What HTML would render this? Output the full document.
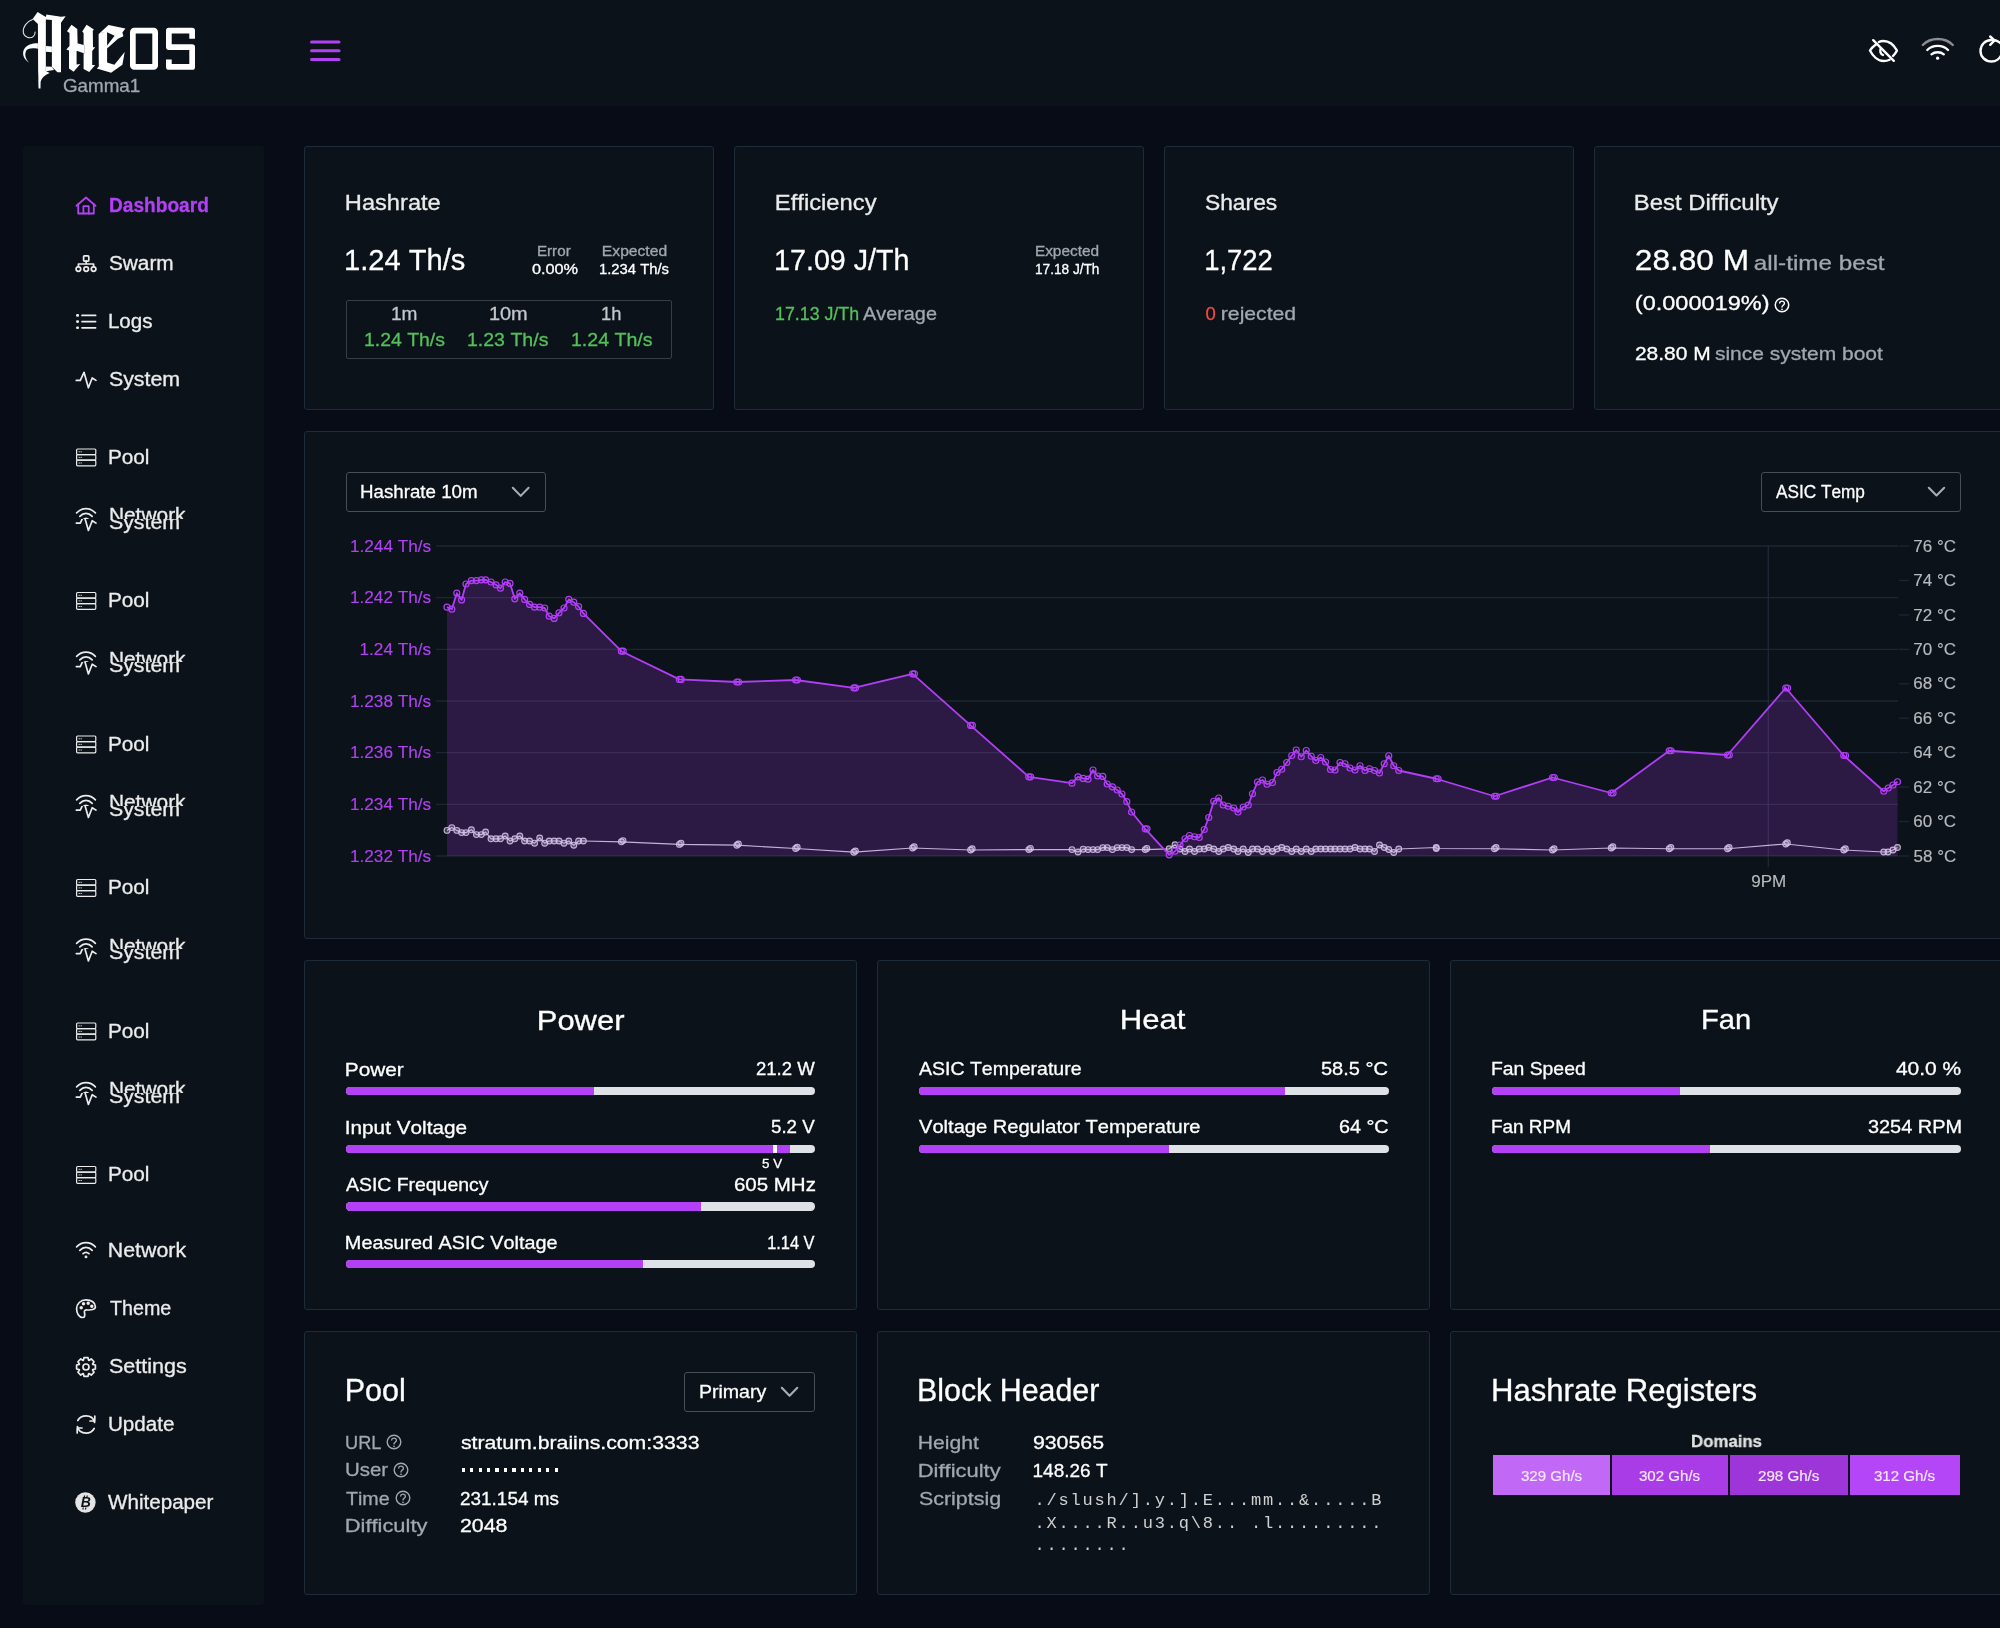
<!DOCTYPE html>
<html><head><meta charset="utf-8"><title>AxeOS Dashboard</title><style>*{margin:0;padding:0;box-sizing:border-box;}
html,body{width:2000px;height:1628px;overflow:hidden;background:#080c16;}
body{position:relative;font-family:"Liberation Sans",sans-serif;font-kerning:none;}
.t{position:absolute;white-space:nowrap;line-height:1;font-kerning:none;-webkit-text-stroke:0.3px currentColor;}
.card{position:absolute;background:#0b1219;border:1px solid #1e2b38;border-radius:3px;}
svg{overflow:visible;}</style></head><body>
<div id="app" style="position:absolute;left:0;top:0;width:2000px;height:1628px;overflow:hidden;will-change:transform;">
<div id="hdr" style="position:absolute;left:0;top:0;width:2000px;height:106px;background:#0b1219;"></div>
<svg style="position:absolute;left:0;top:0" width="210" height="100" viewBox="0 0 210 100">
<g fill="#ffffff">
<path d="M32.65,19 L37.6,12.1 L45.85,17.1 L46.4,14.6 L61,16.8 L65.65,16.25 L61,22.85 L61,72.35 L57.4,72.35 L51.9,66.85 L51.9,20.1 L45.85,19.5 L45.85,71.25 L38.15,71.25 L37.9,23.95 Z"/>
<path d="M38.15,71 L45.85,71 L49.7,72.9 C45.5,74.5 41.5,77.5 40.6,82 L40.5,88.4 L38.6,88.4 C38.2,84 38.5,79 38.3,75 Z"/>
<path d="M45.85,46 L51.9,46.6 L51.9,52.2 L45.85,51.8 Z"/>
<path d="M45.85,66.5 L51.9,66.85 L54,70 L45.85,71.25 Z"/>
<path d="M37.9,43.2 C33,43 27,44.5 24.5,48.5 C22,52.5 22.5,58.5 29.1,62.7 C25.5,59 24.5,55 25.8,51.5 C27,48.5 31,47.7 37.9,48.7 Z"/>
<path d="M67,31.3 L71.5,24.8 L77.3,28.9 L77.6,43.3 L77.6,50.8 L76.6,51 L76.6,64.5 L80.3,64.1 L73.6,71.8 L69,68.4 L69,50.6 L66.3,49.5 L69.5,46 L69.5,33 Z"/>
<path d="M82.2,31.6 L86.6,24.8 L93.9,29.6 L92.8,31 L93,47.2 L95.2,47.2 L92.2,50.9 L92.2,65.1 L95.2,65.1 L89.2,72.1 L83.6,69.1 L83.6,53.5 L84.4,53.3 L84.4,45.3 L83.6,45.1 L83.6,33 Z"/>
<path d="M77.3,43.2 L84.5,45.2 L84.5,53.4 L76.6,50.8 Z"/>
<path d="M98.6,34.2 L99.8,33 L107.1,31.6 L107.1,62.5 L114.4,64.8 L124.7,51.9 L122.4,64.8 L111.1,72.8 L96.8,68.4 L98.8,66.5 Z"/>
<path d="M99.8,33 L108.5,25 L125.4,28.6 L122.4,32.6 L123.4,36.3 L118,38.7 L107.1,48.6 L107.1,45.6 L114.6,35.8 L107.1,32.3 Z"/>
</g>
<g fill="none" stroke="#e0e0e0" stroke-width="1.1">
<path d="M32.9,19.3 C27,21.5 22.5,27 23.3,32.5 C24,37 30,39.5 33.5,36.3 C34.6,35.2 35.3,33.5 35.1,31.6"/>
</g>
<g fill="none" stroke="#ffffff" stroke-width="5.7" stroke-linejoin="round">
<rect x="132.85" y="30.65" width="22.3" height="36.3" rx="1.5"/>
<path d="M192.15,38.7 V30.65 H168.85 V47.1 H192.15 V66.95 H168.85 V59.6"/>
</g>
</svg>
<div class="t" style="left:63.30px;top:78.24px;font-size:17.9px;color:#a3a6ae;transform:scaleX(1.0510);transform-origin:0.90px 0;">Gamma1</div>
<svg style="position:absolute;left:300px;top:30px" width="50" height="40" viewBox="300 30 50 40">
<g stroke="#b340f5" stroke-width="3" stroke-linecap="round"><line x1="311.5" y1="42" x2="339" y2="42"/><line x1="311.5" y1="50.75" x2="339" y2="50.75"/><line x1="311.5" y1="59.5" x2="339" y2="59.5"/></g></svg>
<svg style="position:absolute;left:1860px;top:25px" width="140" height="50" viewBox="1860 25 140 50">
<g fill="none" stroke="#ffffff" stroke-width="2.4" stroke-linecap="round" stroke-linejoin="round">
<path d="M1876.2,44.2 C1873,46.5 1870.8,49 1870,50.5 C1872.5,55.5 1877.5,61 1883.5,61 C1886,61 1888,60.5 1889.6,59.7"/>
<path d="M1878.8,42 C1880.2,41.3 1881.8,41 1883.5,41 C1889.5,41 1894.5,46 1897,50.5 C1896,52.5 1894.6,54.3 1893,56"/>
<path d="M1880.8,48.5 C1879.5,51 1880.5,54 1883,55"/>
<line x1="1873.2" y1="40.2" x2="1893.8" y2="60.8"/>
</g>
<g fill="none" stroke-width="2.4" stroke-linecap="round">
<path d="M1922.8,45 C1930.5,37 1945,37 1952.8,45" stroke="#8a8d92"/>
<path d="M1927.3,50 C1932.8,44.5 1942.5,44.5 1948,50" stroke="#ffffff"/>
<path d="M1931.5,54.3 C1934.8,51.5 1940.5,51.5 1943.8,54.3" stroke="#ffffff"/>
</g>
<circle cx="1937.6" cy="58.2" r="1.6" fill="#ffffff"/>
<g fill="none" stroke="#ffffff" stroke-width="2.4" stroke-linecap="round" stroke-linejoin="round">
<path d="M2001,43.5 C1998.5,41 1995,40 1991.5,40 C1985,40 1980.5,45 1980.5,51 C1980.5,57 1985.5,61.5 1991.5,61.5 C1996,61.5 2000,58.5 2001.5,54.5"/>
<path d="M1990.2,36.5 L1994.5,40.5 L1990.2,44.8"/>
</g>
</svg>
<div id="side" style="position:absolute;left:23px;top:146px;width:241px;height:1459px;background:#0b1219;border-radius:3px;"></div>
<svg style="position:absolute;left:70px;top:190px" width="32" height="32" viewBox="70 190 32 32"><g fill="none" stroke="#b340f5" stroke-width="1.8" stroke-linecap="round" stroke-linejoin="round"><path d="M76.5,205.8 L86,197.5 L95.5,205.8"/><path d="M78.2,204.0 V213.5 H93.8 V204.0"/><path d="M83.4,213.5 V206.1 H88.7 V213.5"/></g></svg>
<div class="t" style="left:108.69px;top:196.10px;font-size:19.6px;color:#b340f5;font-weight:700;transform:scaleX(0.9752);transform-origin:1.31px 0;">Dashboard</div>
<svg style="position:absolute;left:70px;top:248px" width="32" height="32" viewBox="70 248 32 32"><g fill="none" stroke="#ececec" stroke-width="1.7" stroke-linecap="round" stroke-linejoin="round"><rect x="83.6" y="255.9" width="5.2" height="5.2" rx="0.8"/><path d="M86.2,261.1 V264.0 M78.4,266.5 V264.0 H93.6 V266.5"/><circle cx="78.4" cy="269.1" r="2.3"/><circle cx="86.2" cy="269.1" r="2.3"/><circle cx="93.6" cy="269.1" r="2.3"/></g></svg>
<div class="t" style="left:108.91px;top:253.60px;font-size:19.6px;color:#ececec;transform:scaleX(1.0612);transform-origin:0.89px 0;">Swarm</div>
<svg style="position:absolute;left:70px;top:306px" width="32" height="32" viewBox="70 306 32 32"><g fill="none" stroke="#ececec" stroke-width="1.7" stroke-linecap="round" stroke-linejoin="round"><path d="M82,315.40000000000003 H95.6 M82,321.6 H95.6 M82,327.8 H95.6"/><path d="M77.3,315.40000000000003 H77.8 M77.3,321.6 H77.8 M77.3,327.8 H77.8" stroke-width="2.6"/></g></svg>
<div class="t" style="left:108.19px;top:311.90px;font-size:19.6px;color:#ececec;transform:scaleX(1.0476);transform-origin:1.61px 0;">Logs</div>
<svg style="position:absolute;left:70px;top:364px" width="32" height="32" viewBox="70 364 32 32"><g fill="none" stroke="#ececec" stroke-width="1.7" stroke-linecap="round" stroke-linejoin="round"><path d="M76.3,380.40000000000003 H80.3 L84,372.3 L88.4,387.8 L92.2,378.0 L96,380.40000000000003"/></g></svg>
<div class="t" style="left:109.11px;top:370.20px;font-size:19.6px;color:#ececec;transform:scaleX(1.0908);transform-origin:0.89px 0;">System</div>
<svg style="position:absolute;left:70px;top:442px" width="32" height="32" viewBox="70 442 32 32"><g fill="none" stroke="#ececec" stroke-width="1.2" stroke-linecap="round" stroke-linejoin="round"><rect x="76.6" y="449.0" width="19.2" height="5.6" rx="1"/><rect x="76.6" y="454.6" width="19.2" height="5.6" rx="1"/><rect x="76.6" y="460.2" width="19.2" height="5.6" rx="1"/><path d="M79,451.8 H79.4 M81,451.8 H81.4 M79,457.4 H79.4 M81,457.4 H81.4 M79,463.0 H79.4 M81,463.0 H81.4" stroke-width="1"/></g></svg>
<div class="t" style="left:108.19px;top:447.90px;font-size:19.6px;color:#ececec;transform:scaleX(1.0603);transform-origin:1.61px 0;">Pool</div>
<div style="position:absolute;left:60px;top:490.0px;width:180px;height:28.8px;overflow:hidden;"><div style="position:absolute;left:-60px;top:-490.0px;width:300px;height:1628px;"><svg style="position:absolute;left:70px;top:500px" width="32" height="32" viewBox="70 500 32 32"><g fill="none" stroke="#ececec" stroke-width="1.7" stroke-linecap="round" stroke-linejoin="round"><path d="M76.6,512.8 C82,507.29999999999995 90,507.29999999999995 95.4,512.8"/><path d="M79.8,516.3 C83.5,512.5 88.5,512.5 92.2,516.3"/><path d="M83,519.6999999999999 C85,517.8 87,517.8 89,519.6999999999999"/><circle cx="86" cy="522.9" r="0.6" fill="#ececec"/></g></svg><div class="t" style="left:108.99px;top:506.30px;font-size:19.6px;color:#ececec;transform:scaleX(1.0668);transform-origin:1.61px 0;">Network</div></div></div>
<div style="position:absolute;left:60px;top:518.8px;width:180px;height:30px;overflow:hidden;"><div style="position:absolute;left:-60px;top:-518.8px;width:300px;height:1628px;"><svg style="position:absolute;left:70px;top:506px" width="32" height="32" viewBox="70 506 32 32"><g fill="none" stroke="#ececec" stroke-width="1.7" stroke-linecap="round" stroke-linejoin="round"><path d="M76.3,523.0999999999999 H80.3 L84,515.0 L88.4,530.5 L92.2,520.6999999999999 L96,523.0999999999999"/></g></svg><div class="t" style="left:109.11px;top:512.90px;font-size:19.6px;color:#ececec;transform:scaleX(1.0908);transform-origin:0.89px 0;">System</div></div></div>
<svg style="position:absolute;left:70px;top:585px" width="32" height="32" viewBox="70 585 32 32"><g fill="none" stroke="#ececec" stroke-width="1.2" stroke-linecap="round" stroke-linejoin="round"><rect x="76.6" y="592.5" width="19.2" height="5.6" rx="1"/><rect x="76.6" y="598.1" width="19.2" height="5.6" rx="1"/><rect x="76.6" y="603.7" width="19.2" height="5.6" rx="1"/><path d="M79,595.3 H79.4 M81,595.3 H81.4 M79,600.9 H79.4 M81,600.9 H81.4 M79,606.5 H79.4 M81,606.5 H81.4" stroke-width="1"/></g></svg>
<div class="t" style="left:108.19px;top:591.40px;font-size:19.6px;color:#ececec;transform:scaleX(1.0603);transform-origin:1.61px 0;">Pool</div>
<div style="position:absolute;left:60px;top:633.5px;width:180px;height:28.8px;overflow:hidden;"><div style="position:absolute;left:-60px;top:-633.5px;width:300px;height:1628px;"><svg style="position:absolute;left:70px;top:644px" width="32" height="32" viewBox="70 644 32 32"><g fill="none" stroke="#ececec" stroke-width="1.7" stroke-linecap="round" stroke-linejoin="round"><path d="M76.6,656.3 C82,650.8 90,650.8 95.4,656.3"/><path d="M79.8,659.8 C83.5,656.0 88.5,656.0 92.2,659.8"/><path d="M83,663.1999999999999 C85,661.3 87,661.3 89,663.1999999999999"/><circle cx="86" cy="666.4" r="0.6" fill="#ececec"/></g></svg><div class="t" style="left:108.99px;top:649.80px;font-size:19.6px;color:#ececec;transform:scaleX(1.0668);transform-origin:1.61px 0;">Network</div></div></div>
<div style="position:absolute;left:60px;top:662.3px;width:180px;height:30px;overflow:hidden;"><div style="position:absolute;left:-60px;top:-662.3px;width:300px;height:1628px;"><svg style="position:absolute;left:70px;top:650px" width="32" height="32" viewBox="70 650 32 32"><g fill="none" stroke="#ececec" stroke-width="1.7" stroke-linecap="round" stroke-linejoin="round"><path d="M76.3,666.5999999999999 H80.3 L84,658.5 L88.4,674.0 L92.2,664.1999999999999 L96,666.5999999999999"/></g></svg><div class="t" style="left:109.11px;top:656.40px;font-size:19.6px;color:#ececec;transform:scaleX(1.0908);transform-origin:0.89px 0;">System</div></div></div>
<svg style="position:absolute;left:70px;top:728px" width="32" height="32" viewBox="70 728 32 32"><g fill="none" stroke="#ececec" stroke-width="1.2" stroke-linecap="round" stroke-linejoin="round"><rect x="76.6" y="736.0" width="19.2" height="5.6" rx="1"/><rect x="76.6" y="741.6" width="19.2" height="5.6" rx="1"/><rect x="76.6" y="747.2" width="19.2" height="5.6" rx="1"/><path d="M79,738.8 H79.4 M81,738.8 H81.4 M79,744.4 H79.4 M81,744.4 H81.4 M79,750.0 H79.4 M81,750.0 H81.4" stroke-width="1"/></g></svg>
<div class="t" style="left:108.19px;top:734.90px;font-size:19.6px;color:#ececec;transform:scaleX(1.0603);transform-origin:1.61px 0;">Pool</div>
<div style="position:absolute;left:60px;top:777.0px;width:180px;height:28.8px;overflow:hidden;"><div style="position:absolute;left:-60px;top:-777.0px;width:300px;height:1628px;"><svg style="position:absolute;left:70px;top:787px" width="32" height="32" viewBox="70 787 32 32"><g fill="none" stroke="#ececec" stroke-width="1.7" stroke-linecap="round" stroke-linejoin="round"><path d="M76.6,799.8 C82,794.3 90,794.3 95.4,799.8"/><path d="M79.8,803.3 C83.5,799.5 88.5,799.5 92.2,803.3"/><path d="M83,806.6999999999999 C85,804.8 87,804.8 89,806.6999999999999"/><circle cx="86" cy="809.9" r="0.6" fill="#ececec"/></g></svg><div class="t" style="left:108.99px;top:793.30px;font-size:19.6px;color:#ececec;transform:scaleX(1.0668);transform-origin:1.61px 0;">Network</div></div></div>
<div style="position:absolute;left:60px;top:805.8px;width:180px;height:30px;overflow:hidden;"><div style="position:absolute;left:-60px;top:-805.8px;width:300px;height:1628px;"><svg style="position:absolute;left:70px;top:793px" width="32" height="32" viewBox="70 793 32 32"><g fill="none" stroke="#ececec" stroke-width="1.7" stroke-linecap="round" stroke-linejoin="round"><path d="M76.3,810.0999999999999 H80.3 L84,802.0 L88.4,817.5 L92.2,807.6999999999999 L96,810.0999999999999"/></g></svg><div class="t" style="left:109.11px;top:799.90px;font-size:19.6px;color:#ececec;transform:scaleX(1.0908);transform-origin:0.89px 0;">System</div></div></div>
<svg style="position:absolute;left:70px;top:872px" width="32" height="32" viewBox="70 872 32 32"><g fill="none" stroke="#ececec" stroke-width="1.2" stroke-linecap="round" stroke-linejoin="round"><rect x="76.6" y="879.5" width="19.2" height="5.6" rx="1"/><rect x="76.6" y="885.1" width="19.2" height="5.6" rx="1"/><rect x="76.6" y="890.7" width="19.2" height="5.6" rx="1"/><path d="M79,882.3 H79.4 M81,882.3 H81.4 M79,887.9 H79.4 M81,887.9 H81.4 M79,893.5 H79.4 M81,893.5 H81.4" stroke-width="1"/></g></svg>
<div class="t" style="left:108.19px;top:878.40px;font-size:19.6px;color:#ececec;transform:scaleX(1.0603);transform-origin:1.61px 0;">Pool</div>
<div style="position:absolute;left:60px;top:920.5px;width:180px;height:28.8px;overflow:hidden;"><div style="position:absolute;left:-60px;top:-920.5px;width:300px;height:1628px;"><svg style="position:absolute;left:70px;top:931px" width="32" height="32" viewBox="70 931 32 32"><g fill="none" stroke="#ececec" stroke-width="1.7" stroke-linecap="round" stroke-linejoin="round"><path d="M76.6,943.3 C82,937.8 90,937.8 95.4,943.3"/><path d="M79.8,946.8 C83.5,943.0 88.5,943.0 92.2,946.8"/><path d="M83,950.1999999999999 C85,948.3 87,948.3 89,950.1999999999999"/><circle cx="86" cy="953.4" r="0.6" fill="#ececec"/></g></svg><div class="t" style="left:108.99px;top:936.80px;font-size:19.6px;color:#ececec;transform:scaleX(1.0668);transform-origin:1.61px 0;">Network</div></div></div>
<div style="position:absolute;left:60px;top:949.3px;width:180px;height:30px;overflow:hidden;"><div style="position:absolute;left:-60px;top:-949.3px;width:300px;height:1628px;"><svg style="position:absolute;left:70px;top:937px" width="32" height="32" viewBox="70 937 32 32"><g fill="none" stroke="#ececec" stroke-width="1.7" stroke-linecap="round" stroke-linejoin="round"><path d="M76.3,953.5999999999999 H80.3 L84,945.5 L88.4,961.0 L92.2,951.1999999999999 L96,953.5999999999999"/></g></svg><div class="t" style="left:109.11px;top:943.40px;font-size:19.6px;color:#ececec;transform:scaleX(1.0908);transform-origin:0.89px 0;">System</div></div></div>
<svg style="position:absolute;left:70px;top:1016px" width="32" height="32" viewBox="70 1016 32 32"><g fill="none" stroke="#ececec" stroke-width="1.2" stroke-linecap="round" stroke-linejoin="round"><rect x="76.6" y="1023.0" width="19.2" height="5.6" rx="1"/><rect x="76.6" y="1028.6" width="19.2" height="5.6" rx="1"/><rect x="76.6" y="1034.2" width="19.2" height="5.6" rx="1"/><path d="M79,1025.8 H79.4 M81,1025.8 H81.4 M79,1031.4 H79.4 M81,1031.4 H81.4 M79,1037.0 H79.4 M81,1037.0 H81.4" stroke-width="1"/></g></svg>
<div class="t" style="left:108.19px;top:1021.90px;font-size:19.6px;color:#ececec;transform:scaleX(1.0603);transform-origin:1.61px 0;">Pool</div>
<div style="position:absolute;left:60px;top:1064.0px;width:180px;height:28.8px;overflow:hidden;"><div style="position:absolute;left:-60px;top:-1064.0px;width:300px;height:1628px;"><svg style="position:absolute;left:70px;top:1074px" width="32" height="32" viewBox="70 1074 32 32"><g fill="none" stroke="#ececec" stroke-width="1.7" stroke-linecap="round" stroke-linejoin="round"><path d="M76.6,1086.8 C82,1081.3 90,1081.3 95.4,1086.8"/><path d="M79.8,1090.3 C83.5,1086.5 88.5,1086.5 92.2,1090.3"/><path d="M83,1093.7 C85,1091.8 87,1091.8 89,1093.7"/><circle cx="86" cy="1096.8999999999999" r="0.6" fill="#ececec"/></g></svg><div class="t" style="left:108.99px;top:1080.30px;font-size:19.6px;color:#ececec;transform:scaleX(1.0668);transform-origin:1.61px 0;">Network</div></div></div>
<div style="position:absolute;left:60px;top:1092.8px;width:180px;height:30px;overflow:hidden;"><div style="position:absolute;left:-60px;top:-1092.8px;width:300px;height:1628px;"><svg style="position:absolute;left:70px;top:1080px" width="32" height="32" viewBox="70 1080 32 32"><g fill="none" stroke="#ececec" stroke-width="1.7" stroke-linecap="round" stroke-linejoin="round"><path d="M76.3,1097.1 H80.3 L84,1089.0 L88.4,1104.5 L92.2,1094.7 L96,1097.1"/></g></svg><div class="t" style="left:109.11px;top:1086.90px;font-size:19.6px;color:#ececec;transform:scaleX(1.0908);transform-origin:0.89px 0;">System</div></div></div>
<svg style="position:absolute;left:70px;top:1159px" width="32" height="32" viewBox="70 1159 32 32"><g fill="none" stroke="#ececec" stroke-width="1.2" stroke-linecap="round" stroke-linejoin="round"><rect x="76.6" y="1166.5" width="19.2" height="5.6" rx="1"/><rect x="76.6" y="1172.1" width="19.2" height="5.6" rx="1"/><rect x="76.6" y="1177.7" width="19.2" height="5.6" rx="1"/><path d="M79,1169.3 H79.4 M81,1169.3 H81.4 M79,1174.9 H79.4 M81,1174.9 H81.4 M79,1180.5 H79.4 M81,1180.5 H81.4" stroke-width="1"/></g></svg>
<div class="t" style="left:108.19px;top:1165.40px;font-size:19.6px;color:#ececec;transform:scaleX(1.0603);transform-origin:1.61px 0;">Pool</div>
<svg style="position:absolute;left:70px;top:1234px" width="32" height="32" viewBox="70 1234 32 32"><g fill="none" stroke="#ececec" stroke-width="1.7" stroke-linecap="round" stroke-linejoin="round"><path d="M76.6,1246.8 C82,1241.3 90,1241.3 95.4,1246.8"/><path d="M79.8,1250.3 C83.5,1246.5 88.5,1246.5 92.2,1250.3"/><path d="M83,1253.7 C85,1251.8 87,1251.8 89,1253.7"/><circle cx="86" cy="1256.8999999999999" r="0.6" fill="#ececec"/></g></svg>
<div class="t" style="left:108.19px;top:1240.70px;font-size:19.6px;color:#ececec;transform:scaleX(1.0881);transform-origin:1.61px 0;">Network</div>
<svg style="position:absolute;left:70px;top:1293px" width="32" height="32" viewBox="70 1293 32 32"><g fill="none" stroke="#ececec" stroke-width="1.7" stroke-linecap="round" stroke-linejoin="round"><path d="M86,1299.9 C80.5,1299.9 76.6,1303.9 76.6,1308.7 C76.6,1313.2 79,1317.2 82.5,1317.5 C85,1317.7 85,1314.7 84.5,1312.7 C84,1310.9 85,1309.7 87,1309.9 C91,1310.2 95.4,1309.7 95.4,1306.7 C95.4,1302.7 91.5,1299.9 86,1299.9 Z"/><circle cx="81.2" cy="1307.7" r="0.9" fill="#ececec"/><circle cx="83.5" cy="1303.7" r="0.9" fill="#ececec"/><circle cx="88.2" cy="1303.2" r="0.9" fill="#ececec"/><circle cx="91.8" cy="1306.2" r="0.9" fill="#ececec"/></g></svg>
<div class="t" style="left:109.56px;top:1299.10px;font-size:19.6px;color:#ececec;transform:scaleX(1.0052);transform-origin:0.44px 0;">Theme</div>
<svg style="position:absolute;left:70px;top:1351px" width="32" height="32" viewBox="70 1351 32 32"><g fill="none" stroke="#ececec" stroke-width="1.7" stroke-linecap="round" stroke-linejoin="round"><polygon points="92.72,1364.42 95.39,1365.00 95.39,1369.00 92.72,1369.58 92.58,1369.93 94.05,1372.23 91.23,1375.05 88.93,1373.58 88.58,1373.72 88.00,1376.39 84.00,1376.39 83.42,1373.72 83.07,1373.58 80.77,1375.05 77.95,1372.23 79.42,1369.93 79.28,1369.58 76.61,1369.00 76.61,1365.00 79.28,1364.42 79.42,1364.07 77.95,1361.77 80.77,1358.95 83.07,1360.42 83.42,1360.28 84.00,1357.61 88.00,1357.61 88.58,1360.28 88.93,1360.42 91.23,1358.95 94.05,1361.77 92.58,1364.07"/><circle cx="86" cy="1367" r="3"/></g></svg>
<div class="t" style="left:109.11px;top:1357.40px;font-size:19.6px;color:#ececec;transform:scaleX(1.0979);transform-origin:0.89px 0;">Settings</div>
<svg style="position:absolute;left:70px;top:1408px" width="32" height="32" viewBox="70 1408 32 32"><g fill="none" stroke="#ececec" stroke-width="1.7" stroke-linecap="round" stroke-linejoin="round"><path d="M94.6,1422.5 C93.5,1418.0 90,1415.9 86,1415.9 C82,1415.9 79.2,1418.0 77.8,1420.5"/><path d="M77.4,1426.5 C78.5,1431.0 82,1433.1 86,1433.1 C90,1433.1 92.8,1431.0 94.2,1428.5"/><path d="M94.8,1416.0 V1421.0 H90"/><path d="M77.2,1433.0 V1428.0 H82"/></g></svg>
<div class="t" style="left:108.49px;top:1415.20px;font-size:19.6px;color:#ececec;transform:scaleX(1.0523);transform-origin:1.51px 0;">Update</div>
<svg style="position:absolute;left:70px;top:1486px" width="32" height="32" viewBox="70 1486 32 32"><circle cx="85.4" cy="1502.5" r="10.2" fill="#e4e4e4"/><text x="85.8" y="1507.1" font-family="Liberation Sans" font-weight="700" font-style="italic" font-size="14" fill="#0b1219" text-anchor="middle">B</text><path d="M84.6,1495.5 L84.2,1497.5 M87.2,1495.5 L86.8,1497.5 M83.3,1507.5 L82.9,1509.5 M85.9,1507.5 L85.5,1509.5" stroke="#0b1219" stroke-width="1.2"/></svg>
<div class="t" style="left:108.21px;top:1492.70px;font-size:19.6px;color:#ececec;transform:scaleX(1.0519);transform-origin:0.09px 0;">Whitepaper</div>
<div class="card" style="left:304px;top:146px;width:410px;height:264px;"></div>
<div class="card" style="left:734px;top:146px;width:410px;height:264px;"></div>
<div class="card" style="left:1164px;top:146px;width:410px;height:264px;"></div>
<div class="card" style="left:1594px;top:146px;width:410px;height:264px;"></div>
<div class="t" style="left:344.74px;top:192.68px;font-size:21.4px;color:#ebebeb;transform:scaleX(1.1055);transform-origin:1.76px 0;">Hashrate</div>
<div class="t" style="left:343.72px;top:244.68px;font-size:29.9px;color:#ffffff;transform:scaleX(0.9728);transform-origin:2.28px 0;">1.24 Th/s</div>
<div class="t" style="left:537.49px;top:244.06px;font-size:14.1px;color:#a3a7ae;transform:scaleX(1.0788);transform-origin:1.16px 0;">Error</div>
<div class="t" style="left:531.60px;top:261.76px;font-size:14.1px;color:#ffffff;transform:scaleX(1.1560);transform-origin:0.55px 0;">0.00%</div>
<div class="t" style="left:602.29px;top:244.06px;font-size:14.1px;color:#a3a7ae;transform:scaleX(1.1106);transform-origin:1.16px 0;">Expected</div>
<div class="t" style="left:599.03px;top:261.76px;font-size:14.1px;color:#ffffff;transform:scaleX(1.0517);transform-origin:1.07px 0;">1.234 Th/s</div>
<div style="position:absolute;left:346px;top:300px;width:326px;height:58.5px;border:1px solid #363e4a;border-radius:2px;"></div>
<div class="t" style="left:391.26px;top:305.00px;font-size:18.9px;color:#c4c7cc;transform:scaleX(1.0098);transform-origin:1.44px 0;">1m</div>
<div class="t" style="left:489.06px;top:305.00px;font-size:18.9px;color:#c4c7cc;transform:scaleX(1.0563);transform-origin:1.44px 0;">10m</div>
<div class="t" style="left:601.26px;top:305.00px;font-size:18.9px;color:#c4c7cc;transform:scaleX(0.9697);transform-origin:1.44px 0;">1h</div>
<div class="t" style="left:363.76px;top:331.40px;font-size:18.9px;color:#55c05a;transform:scaleX(1.0278);transform-origin:1.44px 0;">1.24 Th/s</div>
<div class="t" style="left:466.96px;top:331.40px;font-size:18.9px;color:#55c05a;transform:scaleX(1.0343);transform-origin:1.44px 0;">1.23 Th/s</div>
<div class="t" style="left:570.56px;top:331.40px;font-size:18.9px;color:#55c05a;transform:scaleX(1.0369);transform-origin:1.44px 0;">1.24 Th/s</div>
<div class="t" style="left:774.74px;top:192.68px;font-size:21.4px;color:#ebebeb;transform:scaleX(1.1116);transform-origin:1.76px 0;">Efficiency</div>
<div class="t" style="left:773.72px;top:244.68px;font-size:29.9px;color:#ffffff;transform:scaleX(0.9587);transform-origin:2.28px 0;">17.09 J/Th</div>
<div class="t" style="left:1034.89px;top:244.06px;font-size:14.1px;color:#a3a7ae;transform:scaleX(1.0930);transform-origin:1.16px 0;">Expected</div>
<div class="t" style="left:1034.53px;top:261.76px;font-size:14.1px;color:#ffffff;transform:scaleX(0.9670);transform-origin:1.07px 0;">17.18 J/Th</div>
<div class="t" style="left:774.59px;top:304.84px;font-size:18.5px;color:#55c05a;transform:scaleX(0.9610);transform-origin:1.41px 0;">17.13 J/Th</div>
<div class="t" style="left:863.46px;top:304.84px;font-size:18.5px;color:#a3a7ae;transform:scaleX(1.0728);transform-origin:0.04px 0;">Average</div>
<div class="t" style="left:1205.03px;top:192.68px;font-size:21.4px;color:#ebebeb;transform:scaleX(1.0672);transform-origin:0.97px 0;">Shares</div>
<div class="t" style="left:1203.72px;top:244.98px;font-size:29.9px;color:#ffffff;transform:scaleX(0.9178);transform-origin:2.28px 0;">1,722</div>
<div class="t" style="left:1205.48px;top:304.64px;font-size:18.5px;color:#f24b3c;">0</div>
<div class="t" style="left:1221.27px;top:304.64px;font-size:18.5px;color:#a3a7ae;transform:scaleX(1.1436);transform-origin:1.23px 0;">rejected</div>
<div class="t" style="left:1634.44px;top:192.78px;font-size:21.4px;color:#ebebeb;transform:scaleX(1.1171);transform-origin:1.76px 0;">Best Difficulty</div>
<div class="t" style="left:1634.55px;top:245.72px;font-size:28.8px;color:#ffffff;transform:scaleX(1.0972);transform-origin:1.45px 0;">28.80 M</div>
<div class="t" style="left:1754.31px;top:252.32px;font-size:21px;color:#a3a7ae;transform:scaleX(1.1546);transform-origin:0.89px 0;">all-time best</div>
<div class="t" style="left:1634.93px;top:292.94px;font-size:20.5px;color:#ffffff;transform:scaleX(1.1477);transform-origin:1.27px 0;">(0.000019%)</div>
<svg style="position:absolute;left:1772.4px;top:294.6px" width="20" height="20" viewBox="1772.4 294.6 20 20"><circle cx="1782.4" cy="304.6" r="6.75" fill="none" stroke="#ffffff" stroke-width="1.5"/><path d="M1780.10,302.70 C1780.10,300.00 1785.00,300.00 1784.80,303.00 C1784.70,304.80 1782.40,305.00 1782.40,306.60" fill="none" stroke="#ffffff" stroke-width="1.42" stroke-linecap="round"/><circle cx="1782.4" cy="308.90" r="0.85" fill="#ffffff"/></svg>
<div class="t" style="left:1635.07px;top:345.04px;font-size:18.5px;color:#ffffff;transform:scaleX(1.1336);transform-origin:0.93px 0;">28.80 M</div>
<div class="t" style="left:1715.19px;top:345.04px;font-size:18.5px;color:#a3a7ae;transform:scaleX(1.1342);transform-origin:0.51px 0;">since system boot</div>
<div class="card" style="left:304px;top:430.5px;width:1700px;height:508.5px;"></div>
<div style="position:absolute;left:346px;top:472px;width:200.0px;height:39.5px;border:1px solid #464e59;border-radius:3px;background:#0b1219;"></div>
<div class="t" style="left:360.40px;top:483.11px;font-size:18.3px;color:#ffffff;transform:scaleX(1.0247);transform-origin:1.50px 0;">Hashrate 10m</div>
<svg style="position:absolute;left:508.4px;top:482.8px" width="25.4" height="17.7" viewBox="508.4 482.8 25.4 17.7"><path d="M513.1999999999999,487.6 L521.10,495.7 L529.0,487.6" fill="none" stroke="#a9adb3" stroke-width="2.1" stroke-linecap="round" stroke-linejoin="round"/></svg>
<div style="position:absolute;left:1760.75px;top:472px;width:200.0px;height:39.5px;border:1px solid #464e59;border-radius:3px;background:#0b1219;"></div>
<div class="t" style="left:1776.21px;top:483.11px;font-size:18.3px;color:#ffffff;transform:scaleX(0.9411);transform-origin:0.04px 0;">ASIC Temp</div>
<svg style="position:absolute;left:1923.5px;top:483px" width="25.0" height="17.2" viewBox="1923.5 483 25.0 17.2"><path d="M1928.3,487.8 L1936.00,495.45 L1943.7,487.8" fill="none" stroke="#a9adb3" stroke-width="2.1" stroke-linecap="round" stroke-linejoin="round"/></svg>
<svg style="position:absolute;left:330px;top:530px" width="1650" height="370" viewBox="330 530 1650 370"><line x1="436" y1="546.00" x2="1898" y2="546.00" stroke="#1c2733" stroke-width="1.3"/><line x1="436" y1="597.67" x2="1898" y2="597.67" stroke="#1c2733" stroke-width="1.3"/><line x1="436" y1="649.33" x2="1898" y2="649.33" stroke="#1c2733" stroke-width="1.3"/><line x1="436" y1="701.00" x2="1898" y2="701.00" stroke="#1c2733" stroke-width="1.3"/><line x1="436" y1="752.67" x2="1898" y2="752.67" stroke="#1c2733" stroke-width="1.3"/><line x1="436" y1="804.33" x2="1898" y2="804.33" stroke="#1c2733" stroke-width="1.3"/><line x1="436" y1="856.00" x2="1898" y2="856.00" stroke="#1c2733" stroke-width="1.3"/><line x1="1768.3" y1="546" x2="1768.3" y2="867" stroke="#1f2b38" stroke-width="1.3"/><line x1="1899" y1="546.00" x2="1909" y2="546.00" stroke="#1c2733" stroke-width="1.3"/><line x1="1899" y1="580.44" x2="1909" y2="580.44" stroke="#1c2733" stroke-width="1.3"/><line x1="1899" y1="614.89" x2="1909" y2="614.89" stroke="#1c2733" stroke-width="1.3"/><line x1="1899" y1="649.33" x2="1909" y2="649.33" stroke="#1c2733" stroke-width="1.3"/><line x1="1899" y1="683.78" x2="1909" y2="683.78" stroke="#1c2733" stroke-width="1.3"/><line x1="1899" y1="718.22" x2="1909" y2="718.22" stroke="#1c2733" stroke-width="1.3"/><line x1="1899" y1="752.67" x2="1909" y2="752.67" stroke="#1c2733" stroke-width="1.3"/><line x1="1899" y1="787.11" x2="1909" y2="787.11" stroke="#1c2733" stroke-width="1.3"/><line x1="1899" y1="821.56" x2="1909" y2="821.56" stroke="#1c2733" stroke-width="1.3"/><line x1="1899" y1="856.00" x2="1909" y2="856.00" stroke="#1c2733" stroke-width="1.3"/><polygon points="447,856 447.00,607.20 451.80,609.20 456.80,593.20 461.60,599.90 466.00,584.00 471.40,580.60 476.40,580.60 481.40,579.80 485.60,579.80 491.00,582.00 496.00,584.80 500.50,588.20 505.20,582.00 510.00,583.40 514.80,598.80 519.80,593.20 524.60,599.40 529.60,604.40 534.60,607.20 539.70,607.20 544.70,608.00 549.20,616.20 554.20,618.40 559.00,612.80 564.00,608.00 568.80,599.40 573.80,602.20 578.60,606.60 583.40,613.40 621.40,651.20 679.40,679.40 736.80,682.00 795.60,680.00 853.80,687.80 912.60,673.80 970.60,725.40 1028.80,776.80 1072.00,783.20 1078.00,776.80 1083.20,778.40 1088.00,779.20 1093.00,770.00 1097.60,776.00 1102.80,776.40 1107.20,784.00 1112.40,786.80 1117.20,790.00 1122.00,794.00 1126.80,801.60 1131.60,812.00 1145.20,828.80 1169.20,854.80 1175.00,851.25 1180.00,845.00 1185.00,838.75 1189.50,835.50 1194.50,836.75 1199.25,837.50 1204.25,829.50 1208.75,817.50 1213.75,801.25 1218.75,798.00 1223.25,805.00 1228.25,806.25 1233.75,808.00 1238.00,812.00 1243.25,807.00 1248.25,805.00 1252.50,793.75 1257.50,782.00 1262.50,780.00 1267.00,784.25 1272.50,782.50 1277.00,772.50 1281.75,769.25 1286.75,762.50 1291.75,755.50 1296.25,750.00 1301.25,756.75 1306.25,750.50 1311.25,756.25 1315.75,760.50 1320.75,757.50 1325.50,762.00 1330.50,769.50 1335.00,770.00 1340.00,762.50 1345.00,763.75 1350.00,768.00 1355.00,770.00 1360.00,765.75 1365.00,770.50 1369.50,768.75 1374.50,770.50 1379.50,773.00 1384.25,763.75 1388.75,755.75 1393.75,765.75 1398.75,770.50 1436.25,778.75 1494.50,796.25 1552.50,777.50 1611.25,793.00 1669.25,750.75 1727.50,755.00 1785.75,688.00 1843.75,755.50 1883.75,791.25 1888.25,788.00 1893.00,785.00 1897.50,781.75 1897.5,856" fill="rgba(178,62,247,0.2)"/><polyline points="447.00,830.40 451.80,827.60 456.80,830.40 461.60,832.60 466.00,832.60 471.40,829.80 476.40,834.60 481.40,834.60 485.60,832.00 491.00,838.80 496.00,838.80 500.50,838.80 505.20,836.00 510.00,841.00 514.80,838.80 519.80,836.00 524.60,841.00 529.60,841.00 534.60,843.20 539.70,838.00 544.70,843.20 549.20,841.00 554.20,841.00 559.00,841.00 564.00,843.20 568.80,841.00 573.80,845.20 578.60,841.00 583.40,841.00 621.40,841.80 679.40,844.40 736.80,845.20 795.60,848.50 853.80,852.20 912.60,848.00 970.60,850.00 1028.80,849.60 1072.00,849.60 1078.00,852.00 1083.20,849.20 1088.00,849.60 1093.00,849.60 1097.60,849.60 1102.80,847.60 1107.20,847.60 1112.40,849.60 1117.20,847.60 1122.00,847.60 1126.80,847.60 1131.60,849.60 1145.20,849.60 1169.20,848.80 1175.00,844.80 1180.00,849.00 1185.00,851.50 1189.50,849.00 1194.50,851.50 1199.25,849.00 1204.25,849.00 1208.75,847.50 1213.75,849.00 1218.75,851.50 1223.25,849.00 1228.25,847.50 1233.75,849.00 1238.00,851.50 1243.25,849.00 1248.25,852.50 1252.50,849.00 1257.50,849.00 1262.50,851.50 1267.00,849.00 1272.50,851.50 1277.00,849.00 1281.75,847.50 1286.75,849.00 1291.75,851.50 1296.25,849.00 1301.25,851.50 1306.25,849.00 1311.25,851.50 1315.75,849.00 1320.75,849.00 1325.50,849.00 1330.50,849.00 1335.00,849.00 1340.00,849.00 1345.00,849.00 1350.00,849.00 1355.00,847.50 1360.00,849.00 1365.00,849.00 1369.50,849.00 1374.50,851.50 1379.50,845.00 1384.25,847.50 1388.75,849.50 1393.75,852.50 1398.75,849.00 1436.25,847.50 1436.25,848.50 1494.50,848.75 1552.50,850.00 1611.25,848.00 1669.25,848.75 1727.50,848.75 1785.75,844.00 1843.75,850.00 1883.75,852.00 1888.00,852.00 1893.00,850.00 1897.50,847.50" fill="none" stroke="#d6c2e8" stroke-width="1.2" stroke-linejoin="round" opacity="0.9"/><circle cx="447.00" cy="830.40" r="2.9" fill="rgba(214,194,232,0.3)" stroke="#d6c2e8" stroke-width="1.1" opacity="0.9"/><circle cx="451.80" cy="827.60" r="2.9" fill="rgba(214,194,232,0.3)" stroke="#d6c2e8" stroke-width="1.1" opacity="0.9"/><circle cx="456.80" cy="830.40" r="2.9" fill="rgba(214,194,232,0.3)" stroke="#d6c2e8" stroke-width="1.1" opacity="0.9"/><circle cx="461.60" cy="832.60" r="2.9" fill="rgba(214,194,232,0.3)" stroke="#d6c2e8" stroke-width="1.1" opacity="0.9"/><circle cx="466.00" cy="832.60" r="2.9" fill="rgba(214,194,232,0.3)" stroke="#d6c2e8" stroke-width="1.1" opacity="0.9"/><circle cx="471.40" cy="829.80" r="2.9" fill="rgba(214,194,232,0.3)" stroke="#d6c2e8" stroke-width="1.1" opacity="0.9"/><circle cx="476.40" cy="834.60" r="2.9" fill="rgba(214,194,232,0.3)" stroke="#d6c2e8" stroke-width="1.1" opacity="0.9"/><circle cx="481.40" cy="834.60" r="2.9" fill="rgba(214,194,232,0.3)" stroke="#d6c2e8" stroke-width="1.1" opacity="0.9"/><circle cx="485.60" cy="832.00" r="2.9" fill="rgba(214,194,232,0.3)" stroke="#d6c2e8" stroke-width="1.1" opacity="0.9"/><circle cx="491.00" cy="838.80" r="2.9" fill="rgba(214,194,232,0.3)" stroke="#d6c2e8" stroke-width="1.1" opacity="0.9"/><circle cx="496.00" cy="838.80" r="2.9" fill="rgba(214,194,232,0.3)" stroke="#d6c2e8" stroke-width="1.1" opacity="0.9"/><circle cx="500.50" cy="838.80" r="2.9" fill="rgba(214,194,232,0.3)" stroke="#d6c2e8" stroke-width="1.1" opacity="0.9"/><circle cx="505.20" cy="836.00" r="2.9" fill="rgba(214,194,232,0.3)" stroke="#d6c2e8" stroke-width="1.1" opacity="0.9"/><circle cx="510.00" cy="841.00" r="2.9" fill="rgba(214,194,232,0.3)" stroke="#d6c2e8" stroke-width="1.1" opacity="0.9"/><circle cx="514.80" cy="838.80" r="2.9" fill="rgba(214,194,232,0.3)" stroke="#d6c2e8" stroke-width="1.1" opacity="0.9"/><circle cx="519.80" cy="836.00" r="2.9" fill="rgba(214,194,232,0.3)" stroke="#d6c2e8" stroke-width="1.1" opacity="0.9"/><circle cx="524.60" cy="841.00" r="2.9" fill="rgba(214,194,232,0.3)" stroke="#d6c2e8" stroke-width="1.1" opacity="0.9"/><circle cx="529.60" cy="841.00" r="2.9" fill="rgba(214,194,232,0.3)" stroke="#d6c2e8" stroke-width="1.1" opacity="0.9"/><circle cx="534.60" cy="843.20" r="2.9" fill="rgba(214,194,232,0.3)" stroke="#d6c2e8" stroke-width="1.1" opacity="0.9"/><circle cx="539.70" cy="838.00" r="2.9" fill="rgba(214,194,232,0.3)" stroke="#d6c2e8" stroke-width="1.1" opacity="0.9"/><circle cx="544.70" cy="843.20" r="2.9" fill="rgba(214,194,232,0.3)" stroke="#d6c2e8" stroke-width="1.1" opacity="0.9"/><circle cx="549.20" cy="841.00" r="2.9" fill="rgba(214,194,232,0.3)" stroke="#d6c2e8" stroke-width="1.1" opacity="0.9"/><circle cx="554.20" cy="841.00" r="2.9" fill="rgba(214,194,232,0.3)" stroke="#d6c2e8" stroke-width="1.1" opacity="0.9"/><circle cx="559.00" cy="841.00" r="2.9" fill="rgba(214,194,232,0.3)" stroke="#d6c2e8" stroke-width="1.1" opacity="0.9"/><circle cx="564.00" cy="843.20" r="2.9" fill="rgba(214,194,232,0.3)" stroke="#d6c2e8" stroke-width="1.1" opacity="0.9"/><circle cx="568.80" cy="841.00" r="2.9" fill="rgba(214,194,232,0.3)" stroke="#d6c2e8" stroke-width="1.1" opacity="0.9"/><circle cx="573.80" cy="845.20" r="2.9" fill="rgba(214,194,232,0.3)" stroke="#d6c2e8" stroke-width="1.1" opacity="0.9"/><circle cx="578.60" cy="841.00" r="2.9" fill="rgba(214,194,232,0.3)" stroke="#d6c2e8" stroke-width="1.1" opacity="0.9"/><circle cx="583.40" cy="841.00" r="2.9" fill="rgba(214,194,232,0.3)" stroke="#d6c2e8" stroke-width="1.1" opacity="0.9"/><circle cx="621.40" cy="841.80" r="2.9" fill="rgba(214,194,232,0.3)" stroke="#d6c2e8" stroke-width="1.1" opacity="0.9"/><circle cx="623.00" cy="840.60" r="2.9" fill="rgba(214,194,232,0.3)" stroke="#d6c2e8" stroke-width="1.1" opacity="0.9"/><circle cx="679.40" cy="844.40" r="2.9" fill="rgba(214,194,232,0.3)" stroke="#d6c2e8" stroke-width="1.1" opacity="0.9"/><circle cx="681.00" cy="843.20" r="2.9" fill="rgba(214,194,232,0.3)" stroke="#d6c2e8" stroke-width="1.1" opacity="0.9"/><circle cx="736.80" cy="845.20" r="2.9" fill="rgba(214,194,232,0.3)" stroke="#d6c2e8" stroke-width="1.1" opacity="0.9"/><circle cx="738.40" cy="844.00" r="2.9" fill="rgba(214,194,232,0.3)" stroke="#d6c2e8" stroke-width="1.1" opacity="0.9"/><circle cx="795.60" cy="848.50" r="2.9" fill="rgba(214,194,232,0.3)" stroke="#d6c2e8" stroke-width="1.1" opacity="0.9"/><circle cx="797.20" cy="847.30" r="2.9" fill="rgba(214,194,232,0.3)" stroke="#d6c2e8" stroke-width="1.1" opacity="0.9"/><circle cx="853.80" cy="852.20" r="2.9" fill="rgba(214,194,232,0.3)" stroke="#d6c2e8" stroke-width="1.1" opacity="0.9"/><circle cx="855.40" cy="851.00" r="2.9" fill="rgba(214,194,232,0.3)" stroke="#d6c2e8" stroke-width="1.1" opacity="0.9"/><circle cx="912.60" cy="848.00" r="2.9" fill="rgba(214,194,232,0.3)" stroke="#d6c2e8" stroke-width="1.1" opacity="0.9"/><circle cx="914.20" cy="846.80" r="2.9" fill="rgba(214,194,232,0.3)" stroke="#d6c2e8" stroke-width="1.1" opacity="0.9"/><circle cx="970.60" cy="850.00" r="2.9" fill="rgba(214,194,232,0.3)" stroke="#d6c2e8" stroke-width="1.1" opacity="0.9"/><circle cx="972.20" cy="848.80" r="2.9" fill="rgba(214,194,232,0.3)" stroke="#d6c2e8" stroke-width="1.1" opacity="0.9"/><circle cx="1028.80" cy="849.60" r="2.9" fill="rgba(214,194,232,0.3)" stroke="#d6c2e8" stroke-width="1.1" opacity="0.9"/><circle cx="1030.40" cy="848.40" r="2.9" fill="rgba(214,194,232,0.3)" stroke="#d6c2e8" stroke-width="1.1" opacity="0.9"/><circle cx="1072.00" cy="849.60" r="2.9" fill="rgba(214,194,232,0.3)" stroke="#d6c2e8" stroke-width="1.1" opacity="0.9"/><circle cx="1078.00" cy="852.00" r="2.9" fill="rgba(214,194,232,0.3)" stroke="#d6c2e8" stroke-width="1.1" opacity="0.9"/><circle cx="1083.20" cy="849.20" r="2.9" fill="rgba(214,194,232,0.3)" stroke="#d6c2e8" stroke-width="1.1" opacity="0.9"/><circle cx="1088.00" cy="849.60" r="2.9" fill="rgba(214,194,232,0.3)" stroke="#d6c2e8" stroke-width="1.1" opacity="0.9"/><circle cx="1093.00" cy="849.60" r="2.9" fill="rgba(214,194,232,0.3)" stroke="#d6c2e8" stroke-width="1.1" opacity="0.9"/><circle cx="1097.60" cy="849.60" r="2.9" fill="rgba(214,194,232,0.3)" stroke="#d6c2e8" stroke-width="1.1" opacity="0.9"/><circle cx="1102.80" cy="847.60" r="2.9" fill="rgba(214,194,232,0.3)" stroke="#d6c2e8" stroke-width="1.1" opacity="0.9"/><circle cx="1107.20" cy="847.60" r="2.9" fill="rgba(214,194,232,0.3)" stroke="#d6c2e8" stroke-width="1.1" opacity="0.9"/><circle cx="1112.40" cy="849.60" r="2.9" fill="rgba(214,194,232,0.3)" stroke="#d6c2e8" stroke-width="1.1" opacity="0.9"/><circle cx="1117.20" cy="847.60" r="2.9" fill="rgba(214,194,232,0.3)" stroke="#d6c2e8" stroke-width="1.1" opacity="0.9"/><circle cx="1122.00" cy="847.60" r="2.9" fill="rgba(214,194,232,0.3)" stroke="#d6c2e8" stroke-width="1.1" opacity="0.9"/><circle cx="1126.80" cy="847.60" r="2.9" fill="rgba(214,194,232,0.3)" stroke="#d6c2e8" stroke-width="1.1" opacity="0.9"/><circle cx="1131.60" cy="849.60" r="2.9" fill="rgba(214,194,232,0.3)" stroke="#d6c2e8" stroke-width="1.1" opacity="0.9"/><circle cx="1145.20" cy="849.60" r="2.9" fill="rgba(214,194,232,0.3)" stroke="#d6c2e8" stroke-width="1.1" opacity="0.9"/><circle cx="1146.80" cy="848.40" r="2.9" fill="rgba(214,194,232,0.3)" stroke="#d6c2e8" stroke-width="1.1" opacity="0.9"/><circle cx="1169.20" cy="848.80" r="2.9" fill="rgba(214,194,232,0.3)" stroke="#d6c2e8" stroke-width="1.1" opacity="0.9"/><circle cx="1175.00" cy="844.80" r="2.9" fill="rgba(214,194,232,0.3)" stroke="#d6c2e8" stroke-width="1.1" opacity="0.9"/><circle cx="1180.00" cy="849.00" r="2.9" fill="rgba(214,194,232,0.3)" stroke="#d6c2e8" stroke-width="1.1" opacity="0.9"/><circle cx="1185.00" cy="851.50" r="2.9" fill="rgba(214,194,232,0.3)" stroke="#d6c2e8" stroke-width="1.1" opacity="0.9"/><circle cx="1189.50" cy="849.00" r="2.9" fill="rgba(214,194,232,0.3)" stroke="#d6c2e8" stroke-width="1.1" opacity="0.9"/><circle cx="1194.50" cy="851.50" r="2.9" fill="rgba(214,194,232,0.3)" stroke="#d6c2e8" stroke-width="1.1" opacity="0.9"/><circle cx="1199.25" cy="849.00" r="2.9" fill="rgba(214,194,232,0.3)" stroke="#d6c2e8" stroke-width="1.1" opacity="0.9"/><circle cx="1204.25" cy="849.00" r="2.9" fill="rgba(214,194,232,0.3)" stroke="#d6c2e8" stroke-width="1.1" opacity="0.9"/><circle cx="1208.75" cy="847.50" r="2.9" fill="rgba(214,194,232,0.3)" stroke="#d6c2e8" stroke-width="1.1" opacity="0.9"/><circle cx="1213.75" cy="849.00" r="2.9" fill="rgba(214,194,232,0.3)" stroke="#d6c2e8" stroke-width="1.1" opacity="0.9"/><circle cx="1218.75" cy="851.50" r="2.9" fill="rgba(214,194,232,0.3)" stroke="#d6c2e8" stroke-width="1.1" opacity="0.9"/><circle cx="1223.25" cy="849.00" r="2.9" fill="rgba(214,194,232,0.3)" stroke="#d6c2e8" stroke-width="1.1" opacity="0.9"/><circle cx="1228.25" cy="847.50" r="2.9" fill="rgba(214,194,232,0.3)" stroke="#d6c2e8" stroke-width="1.1" opacity="0.9"/><circle cx="1233.75" cy="849.00" r="2.9" fill="rgba(214,194,232,0.3)" stroke="#d6c2e8" stroke-width="1.1" opacity="0.9"/><circle cx="1238.00" cy="851.50" r="2.9" fill="rgba(214,194,232,0.3)" stroke="#d6c2e8" stroke-width="1.1" opacity="0.9"/><circle cx="1243.25" cy="849.00" r="2.9" fill="rgba(214,194,232,0.3)" stroke="#d6c2e8" stroke-width="1.1" opacity="0.9"/><circle cx="1248.25" cy="852.50" r="2.9" fill="rgba(214,194,232,0.3)" stroke="#d6c2e8" stroke-width="1.1" opacity="0.9"/><circle cx="1252.50" cy="849.00" r="2.9" fill="rgba(214,194,232,0.3)" stroke="#d6c2e8" stroke-width="1.1" opacity="0.9"/><circle cx="1257.50" cy="849.00" r="2.9" fill="rgba(214,194,232,0.3)" stroke="#d6c2e8" stroke-width="1.1" opacity="0.9"/><circle cx="1262.50" cy="851.50" r="2.9" fill="rgba(214,194,232,0.3)" stroke="#d6c2e8" stroke-width="1.1" opacity="0.9"/><circle cx="1267.00" cy="849.00" r="2.9" fill="rgba(214,194,232,0.3)" stroke="#d6c2e8" stroke-width="1.1" opacity="0.9"/><circle cx="1272.50" cy="851.50" r="2.9" fill="rgba(214,194,232,0.3)" stroke="#d6c2e8" stroke-width="1.1" opacity="0.9"/><circle cx="1277.00" cy="849.00" r="2.9" fill="rgba(214,194,232,0.3)" stroke="#d6c2e8" stroke-width="1.1" opacity="0.9"/><circle cx="1281.75" cy="847.50" r="2.9" fill="rgba(214,194,232,0.3)" stroke="#d6c2e8" stroke-width="1.1" opacity="0.9"/><circle cx="1286.75" cy="849.00" r="2.9" fill="rgba(214,194,232,0.3)" stroke="#d6c2e8" stroke-width="1.1" opacity="0.9"/><circle cx="1291.75" cy="851.50" r="2.9" fill="rgba(214,194,232,0.3)" stroke="#d6c2e8" stroke-width="1.1" opacity="0.9"/><circle cx="1296.25" cy="849.00" r="2.9" fill="rgba(214,194,232,0.3)" stroke="#d6c2e8" stroke-width="1.1" opacity="0.9"/><circle cx="1301.25" cy="851.50" r="2.9" fill="rgba(214,194,232,0.3)" stroke="#d6c2e8" stroke-width="1.1" opacity="0.9"/><circle cx="1306.25" cy="849.00" r="2.9" fill="rgba(214,194,232,0.3)" stroke="#d6c2e8" stroke-width="1.1" opacity="0.9"/><circle cx="1311.25" cy="851.50" r="2.9" fill="rgba(214,194,232,0.3)" stroke="#d6c2e8" stroke-width="1.1" opacity="0.9"/><circle cx="1315.75" cy="849.00" r="2.9" fill="rgba(214,194,232,0.3)" stroke="#d6c2e8" stroke-width="1.1" opacity="0.9"/><circle cx="1320.75" cy="849.00" r="2.9" fill="rgba(214,194,232,0.3)" stroke="#d6c2e8" stroke-width="1.1" opacity="0.9"/><circle cx="1325.50" cy="849.00" r="2.9" fill="rgba(214,194,232,0.3)" stroke="#d6c2e8" stroke-width="1.1" opacity="0.9"/><circle cx="1330.50" cy="849.00" r="2.9" fill="rgba(214,194,232,0.3)" stroke="#d6c2e8" stroke-width="1.1" opacity="0.9"/><circle cx="1335.00" cy="849.00" r="2.9" fill="rgba(214,194,232,0.3)" stroke="#d6c2e8" stroke-width="1.1" opacity="0.9"/><circle cx="1340.00" cy="849.00" r="2.9" fill="rgba(214,194,232,0.3)" stroke="#d6c2e8" stroke-width="1.1" opacity="0.9"/><circle cx="1345.00" cy="849.00" r="2.9" fill="rgba(214,194,232,0.3)" stroke="#d6c2e8" stroke-width="1.1" opacity="0.9"/><circle cx="1350.00" cy="849.00" r="2.9" fill="rgba(214,194,232,0.3)" stroke="#d6c2e8" stroke-width="1.1" opacity="0.9"/><circle cx="1355.00" cy="847.50" r="2.9" fill="rgba(214,194,232,0.3)" stroke="#d6c2e8" stroke-width="1.1" opacity="0.9"/><circle cx="1360.00" cy="849.00" r="2.9" fill="rgba(214,194,232,0.3)" stroke="#d6c2e8" stroke-width="1.1" opacity="0.9"/><circle cx="1365.00" cy="849.00" r="2.9" fill="rgba(214,194,232,0.3)" stroke="#d6c2e8" stroke-width="1.1" opacity="0.9"/><circle cx="1369.50" cy="849.00" r="2.9" fill="rgba(214,194,232,0.3)" stroke="#d6c2e8" stroke-width="1.1" opacity="0.9"/><circle cx="1374.50" cy="851.50" r="2.9" fill="rgba(214,194,232,0.3)" stroke="#d6c2e8" stroke-width="1.1" opacity="0.9"/><circle cx="1379.50" cy="845.00" r="2.9" fill="rgba(214,194,232,0.3)" stroke="#d6c2e8" stroke-width="1.1" opacity="0.9"/><circle cx="1384.25" cy="847.50" r="2.9" fill="rgba(214,194,232,0.3)" stroke="#d6c2e8" stroke-width="1.1" opacity="0.9"/><circle cx="1388.75" cy="849.50" r="2.9" fill="rgba(214,194,232,0.3)" stroke="#d6c2e8" stroke-width="1.1" opacity="0.9"/><circle cx="1393.75" cy="852.50" r="2.9" fill="rgba(214,194,232,0.3)" stroke="#d6c2e8" stroke-width="1.1" opacity="0.9"/><circle cx="1398.75" cy="849.00" r="2.9" fill="rgba(214,194,232,0.3)" stroke="#d6c2e8" stroke-width="1.1" opacity="0.9"/><circle cx="1436.25" cy="847.50" r="2.9" fill="rgba(214,194,232,0.3)" stroke="#d6c2e8" stroke-width="1.1" opacity="0.9"/><circle cx="1436.25" cy="848.50" r="2.9" fill="rgba(214,194,232,0.3)" stroke="#d6c2e8" stroke-width="1.1" opacity="0.9"/><circle cx="1494.50" cy="848.75" r="2.9" fill="rgba(214,194,232,0.3)" stroke="#d6c2e8" stroke-width="1.1" opacity="0.9"/><circle cx="1496.10" cy="847.55" r="2.9" fill="rgba(214,194,232,0.3)" stroke="#d6c2e8" stroke-width="1.1" opacity="0.9"/><circle cx="1552.50" cy="850.00" r="2.9" fill="rgba(214,194,232,0.3)" stroke="#d6c2e8" stroke-width="1.1" opacity="0.9"/><circle cx="1554.10" cy="848.80" r="2.9" fill="rgba(214,194,232,0.3)" stroke="#d6c2e8" stroke-width="1.1" opacity="0.9"/><circle cx="1611.25" cy="848.00" r="2.9" fill="rgba(214,194,232,0.3)" stroke="#d6c2e8" stroke-width="1.1" opacity="0.9"/><circle cx="1612.85" cy="846.80" r="2.9" fill="rgba(214,194,232,0.3)" stroke="#d6c2e8" stroke-width="1.1" opacity="0.9"/><circle cx="1669.25" cy="848.75" r="2.9" fill="rgba(214,194,232,0.3)" stroke="#d6c2e8" stroke-width="1.1" opacity="0.9"/><circle cx="1670.85" cy="847.55" r="2.9" fill="rgba(214,194,232,0.3)" stroke="#d6c2e8" stroke-width="1.1" opacity="0.9"/><circle cx="1727.50" cy="848.75" r="2.9" fill="rgba(214,194,232,0.3)" stroke="#d6c2e8" stroke-width="1.1" opacity="0.9"/><circle cx="1729.10" cy="847.55" r="2.9" fill="rgba(214,194,232,0.3)" stroke="#d6c2e8" stroke-width="1.1" opacity="0.9"/><circle cx="1785.75" cy="844.00" r="2.9" fill="rgba(214,194,232,0.3)" stroke="#d6c2e8" stroke-width="1.1" opacity="0.9"/><circle cx="1787.35" cy="842.80" r="2.9" fill="rgba(214,194,232,0.3)" stroke="#d6c2e8" stroke-width="1.1" opacity="0.9"/><circle cx="1843.75" cy="850.00" r="2.9" fill="rgba(214,194,232,0.3)" stroke="#d6c2e8" stroke-width="1.1" opacity="0.9"/><circle cx="1845.35" cy="848.80" r="2.9" fill="rgba(214,194,232,0.3)" stroke="#d6c2e8" stroke-width="1.1" opacity="0.9"/><circle cx="1883.75" cy="852.00" r="2.9" fill="rgba(214,194,232,0.3)" stroke="#d6c2e8" stroke-width="1.1" opacity="0.9"/><circle cx="1888.00" cy="852.00" r="2.9" fill="rgba(214,194,232,0.3)" stroke="#d6c2e8" stroke-width="1.1" opacity="0.9"/><circle cx="1893.00" cy="850.00" r="2.9" fill="rgba(214,194,232,0.3)" stroke="#d6c2e8" stroke-width="1.1" opacity="0.9"/><circle cx="1897.50" cy="847.50" r="2.9" fill="rgba(214,194,232,0.3)" stroke="#d6c2e8" stroke-width="1.1" opacity="0.9"/><polyline points="447.00,607.20 451.80,609.20 456.80,593.20 461.60,599.90 466.00,584.00 471.40,580.60 476.40,580.60 481.40,579.80 485.60,579.80 491.00,582.00 496.00,584.80 500.50,588.20 505.20,582.00 510.00,583.40 514.80,598.80 519.80,593.20 524.60,599.40 529.60,604.40 534.60,607.20 539.70,607.20 544.70,608.00 549.20,616.20 554.20,618.40 559.00,612.80 564.00,608.00 568.80,599.40 573.80,602.20 578.60,606.60 583.40,613.40 621.40,651.20 679.40,679.40 736.80,682.00 795.60,680.00 853.80,687.80 912.60,673.80 970.60,725.40 1028.80,776.80 1072.00,783.20 1078.00,776.80 1083.20,778.40 1088.00,779.20 1093.00,770.00 1097.60,776.00 1102.80,776.40 1107.20,784.00 1112.40,786.80 1117.20,790.00 1122.00,794.00 1126.80,801.60 1131.60,812.00 1145.20,828.80 1169.20,854.80 1175.00,851.25 1180.00,845.00 1185.00,838.75 1189.50,835.50 1194.50,836.75 1199.25,837.50 1204.25,829.50 1208.75,817.50 1213.75,801.25 1218.75,798.00 1223.25,805.00 1228.25,806.25 1233.75,808.00 1238.00,812.00 1243.25,807.00 1248.25,805.00 1252.50,793.75 1257.50,782.00 1262.50,780.00 1267.00,784.25 1272.50,782.50 1277.00,772.50 1281.75,769.25 1286.75,762.50 1291.75,755.50 1296.25,750.00 1301.25,756.75 1306.25,750.50 1311.25,756.25 1315.75,760.50 1320.75,757.50 1325.50,762.00 1330.50,769.50 1335.00,770.00 1340.00,762.50 1345.00,763.75 1350.00,768.00 1355.00,770.00 1360.00,765.75 1365.00,770.50 1369.50,768.75 1374.50,770.50 1379.50,773.00 1384.25,763.75 1388.75,755.75 1393.75,765.75 1398.75,770.50 1436.25,778.75 1494.50,796.25 1552.50,777.50 1611.25,793.00 1669.25,750.75 1727.50,755.00 1785.75,688.00 1843.75,755.50 1883.75,791.25 1888.25,788.00 1893.00,785.00 1897.50,781.75" fill="none" stroke="#b23ef7" stroke-width="1.8" stroke-linejoin="round"/><circle cx="447.00" cy="607.20" r="3" fill="none" stroke="#b23ef7" stroke-width="1.2"/><circle cx="451.80" cy="609.20" r="3" fill="none" stroke="#b23ef7" stroke-width="1.2"/><circle cx="456.80" cy="593.20" r="3" fill="none" stroke="#b23ef7" stroke-width="1.2"/><circle cx="461.60" cy="599.90" r="3" fill="none" stroke="#b23ef7" stroke-width="1.2"/><circle cx="466.00" cy="584.00" r="3" fill="none" stroke="#b23ef7" stroke-width="1.2"/><circle cx="471.40" cy="580.60" r="3" fill="none" stroke="#b23ef7" stroke-width="1.2"/><circle cx="476.40" cy="580.60" r="3" fill="none" stroke="#b23ef7" stroke-width="1.2"/><circle cx="481.40" cy="579.80" r="3" fill="none" stroke="#b23ef7" stroke-width="1.2"/><circle cx="485.60" cy="579.80" r="3" fill="none" stroke="#b23ef7" stroke-width="1.2"/><circle cx="491.00" cy="582.00" r="3" fill="none" stroke="#b23ef7" stroke-width="1.2"/><circle cx="496.00" cy="584.80" r="3" fill="none" stroke="#b23ef7" stroke-width="1.2"/><circle cx="500.50" cy="588.20" r="3" fill="none" stroke="#b23ef7" stroke-width="1.2"/><circle cx="505.20" cy="582.00" r="3" fill="none" stroke="#b23ef7" stroke-width="1.2"/><circle cx="510.00" cy="583.40" r="3" fill="none" stroke="#b23ef7" stroke-width="1.2"/><circle cx="514.80" cy="598.80" r="3" fill="none" stroke="#b23ef7" stroke-width="1.2"/><circle cx="519.80" cy="593.20" r="3" fill="none" stroke="#b23ef7" stroke-width="1.2"/><circle cx="524.60" cy="599.40" r="3" fill="none" stroke="#b23ef7" stroke-width="1.2"/><circle cx="529.60" cy="604.40" r="3" fill="none" stroke="#b23ef7" stroke-width="1.2"/><circle cx="534.60" cy="607.20" r="3" fill="none" stroke="#b23ef7" stroke-width="1.2"/><circle cx="539.70" cy="607.20" r="3" fill="none" stroke="#b23ef7" stroke-width="1.2"/><circle cx="544.70" cy="608.00" r="3" fill="none" stroke="#b23ef7" stroke-width="1.2"/><circle cx="549.20" cy="616.20" r="3" fill="none" stroke="#b23ef7" stroke-width="1.2"/><circle cx="554.20" cy="618.40" r="3" fill="none" stroke="#b23ef7" stroke-width="1.2"/><circle cx="559.00" cy="612.80" r="3" fill="none" stroke="#b23ef7" stroke-width="1.2"/><circle cx="564.00" cy="608.00" r="3" fill="none" stroke="#b23ef7" stroke-width="1.2"/><circle cx="568.80" cy="599.40" r="3" fill="none" stroke="#b23ef7" stroke-width="1.2"/><circle cx="573.80" cy="602.20" r="3" fill="none" stroke="#b23ef7" stroke-width="1.2"/><circle cx="578.60" cy="606.60" r="3" fill="none" stroke="#b23ef7" stroke-width="1.2"/><circle cx="583.40" cy="613.40" r="3" fill="none" stroke="#b23ef7" stroke-width="1.2"/><circle cx="621.40" cy="651.20" r="3" fill="none" stroke="#b23ef7" stroke-width="1.2"/><circle cx="623.20" cy="651.20" r="3" fill="none" stroke="#b23ef7" stroke-width="1.2"/><circle cx="679.40" cy="679.40" r="3" fill="none" stroke="#b23ef7" stroke-width="1.2"/><circle cx="681.20" cy="679.40" r="3" fill="none" stroke="#b23ef7" stroke-width="1.2"/><circle cx="736.80" cy="682.00" r="3" fill="none" stroke="#b23ef7" stroke-width="1.2"/><circle cx="738.60" cy="682.00" r="3" fill="none" stroke="#b23ef7" stroke-width="1.2"/><circle cx="795.60" cy="680.00" r="3" fill="none" stroke="#b23ef7" stroke-width="1.2"/><circle cx="797.40" cy="680.00" r="3" fill="none" stroke="#b23ef7" stroke-width="1.2"/><circle cx="853.80" cy="687.80" r="3" fill="none" stroke="#b23ef7" stroke-width="1.2"/><circle cx="855.60" cy="687.80" r="3" fill="none" stroke="#b23ef7" stroke-width="1.2"/><circle cx="912.60" cy="673.80" r="3" fill="none" stroke="#b23ef7" stroke-width="1.2"/><circle cx="914.40" cy="673.80" r="3" fill="none" stroke="#b23ef7" stroke-width="1.2"/><circle cx="970.60" cy="725.40" r="3" fill="none" stroke="#b23ef7" stroke-width="1.2"/><circle cx="972.40" cy="725.40" r="3" fill="none" stroke="#b23ef7" stroke-width="1.2"/><circle cx="1028.80" cy="776.80" r="3" fill="none" stroke="#b23ef7" stroke-width="1.2"/><circle cx="1030.60" cy="776.80" r="3" fill="none" stroke="#b23ef7" stroke-width="1.2"/><circle cx="1072.00" cy="783.20" r="3" fill="none" stroke="#b23ef7" stroke-width="1.2"/><circle cx="1078.00" cy="776.80" r="3" fill="none" stroke="#b23ef7" stroke-width="1.2"/><circle cx="1083.20" cy="778.40" r="3" fill="none" stroke="#b23ef7" stroke-width="1.2"/><circle cx="1088.00" cy="779.20" r="3" fill="none" stroke="#b23ef7" stroke-width="1.2"/><circle cx="1093.00" cy="770.00" r="3" fill="none" stroke="#b23ef7" stroke-width="1.2"/><circle cx="1097.60" cy="776.00" r="3" fill="none" stroke="#b23ef7" stroke-width="1.2"/><circle cx="1102.80" cy="776.40" r="3" fill="none" stroke="#b23ef7" stroke-width="1.2"/><circle cx="1107.20" cy="784.00" r="3" fill="none" stroke="#b23ef7" stroke-width="1.2"/><circle cx="1112.40" cy="786.80" r="3" fill="none" stroke="#b23ef7" stroke-width="1.2"/><circle cx="1117.20" cy="790.00" r="3" fill="none" stroke="#b23ef7" stroke-width="1.2"/><circle cx="1122.00" cy="794.00" r="3" fill="none" stroke="#b23ef7" stroke-width="1.2"/><circle cx="1126.80" cy="801.60" r="3" fill="none" stroke="#b23ef7" stroke-width="1.2"/><circle cx="1131.60" cy="812.00" r="3" fill="none" stroke="#b23ef7" stroke-width="1.2"/><circle cx="1145.20" cy="828.80" r="3" fill="none" stroke="#b23ef7" stroke-width="1.2"/><circle cx="1147.00" cy="828.80" r="3" fill="none" stroke="#b23ef7" stroke-width="1.2"/><circle cx="1169.20" cy="854.80" r="3" fill="none" stroke="#b23ef7" stroke-width="1.2"/><circle cx="1175.00" cy="851.25" r="3" fill="none" stroke="#b23ef7" stroke-width="1.2"/><circle cx="1180.00" cy="845.00" r="3" fill="none" stroke="#b23ef7" stroke-width="1.2"/><circle cx="1185.00" cy="838.75" r="3" fill="none" stroke="#b23ef7" stroke-width="1.2"/><circle cx="1189.50" cy="835.50" r="3" fill="none" stroke="#b23ef7" stroke-width="1.2"/><circle cx="1194.50" cy="836.75" r="3" fill="none" stroke="#b23ef7" stroke-width="1.2"/><circle cx="1199.25" cy="837.50" r="3" fill="none" stroke="#b23ef7" stroke-width="1.2"/><circle cx="1204.25" cy="829.50" r="3" fill="none" stroke="#b23ef7" stroke-width="1.2"/><circle cx="1208.75" cy="817.50" r="3" fill="none" stroke="#b23ef7" stroke-width="1.2"/><circle cx="1213.75" cy="801.25" r="3" fill="none" stroke="#b23ef7" stroke-width="1.2"/><circle cx="1218.75" cy="798.00" r="3" fill="none" stroke="#b23ef7" stroke-width="1.2"/><circle cx="1223.25" cy="805.00" r="3" fill="none" stroke="#b23ef7" stroke-width="1.2"/><circle cx="1228.25" cy="806.25" r="3" fill="none" stroke="#b23ef7" stroke-width="1.2"/><circle cx="1233.75" cy="808.00" r="3" fill="none" stroke="#b23ef7" stroke-width="1.2"/><circle cx="1238.00" cy="812.00" r="3" fill="none" stroke="#b23ef7" stroke-width="1.2"/><circle cx="1243.25" cy="807.00" r="3" fill="none" stroke="#b23ef7" stroke-width="1.2"/><circle cx="1248.25" cy="805.00" r="3" fill="none" stroke="#b23ef7" stroke-width="1.2"/><circle cx="1252.50" cy="793.75" r="3" fill="none" stroke="#b23ef7" stroke-width="1.2"/><circle cx="1257.50" cy="782.00" r="3" fill="none" stroke="#b23ef7" stroke-width="1.2"/><circle cx="1262.50" cy="780.00" r="3" fill="none" stroke="#b23ef7" stroke-width="1.2"/><circle cx="1267.00" cy="784.25" r="3" fill="none" stroke="#b23ef7" stroke-width="1.2"/><circle cx="1272.50" cy="782.50" r="3" fill="none" stroke="#b23ef7" stroke-width="1.2"/><circle cx="1277.00" cy="772.50" r="3" fill="none" stroke="#b23ef7" stroke-width="1.2"/><circle cx="1281.75" cy="769.25" r="3" fill="none" stroke="#b23ef7" stroke-width="1.2"/><circle cx="1286.75" cy="762.50" r="3" fill="none" stroke="#b23ef7" stroke-width="1.2"/><circle cx="1291.75" cy="755.50" r="3" fill="none" stroke="#b23ef7" stroke-width="1.2"/><circle cx="1296.25" cy="750.00" r="3" fill="none" stroke="#b23ef7" stroke-width="1.2"/><circle cx="1301.25" cy="756.75" r="3" fill="none" stroke="#b23ef7" stroke-width="1.2"/><circle cx="1306.25" cy="750.50" r="3" fill="none" stroke="#b23ef7" stroke-width="1.2"/><circle cx="1311.25" cy="756.25" r="3" fill="none" stroke="#b23ef7" stroke-width="1.2"/><circle cx="1315.75" cy="760.50" r="3" fill="none" stroke="#b23ef7" stroke-width="1.2"/><circle cx="1320.75" cy="757.50" r="3" fill="none" stroke="#b23ef7" stroke-width="1.2"/><circle cx="1325.50" cy="762.00" r="3" fill="none" stroke="#b23ef7" stroke-width="1.2"/><circle cx="1330.50" cy="769.50" r="3" fill="none" stroke="#b23ef7" stroke-width="1.2"/><circle cx="1335.00" cy="770.00" r="3" fill="none" stroke="#b23ef7" stroke-width="1.2"/><circle cx="1340.00" cy="762.50" r="3" fill="none" stroke="#b23ef7" stroke-width="1.2"/><circle cx="1345.00" cy="763.75" r="3" fill="none" stroke="#b23ef7" stroke-width="1.2"/><circle cx="1350.00" cy="768.00" r="3" fill="none" stroke="#b23ef7" stroke-width="1.2"/><circle cx="1355.00" cy="770.00" r="3" fill="none" stroke="#b23ef7" stroke-width="1.2"/><circle cx="1360.00" cy="765.75" r="3" fill="none" stroke="#b23ef7" stroke-width="1.2"/><circle cx="1365.00" cy="770.50" r="3" fill="none" stroke="#b23ef7" stroke-width="1.2"/><circle cx="1369.50" cy="768.75" r="3" fill="none" stroke="#b23ef7" stroke-width="1.2"/><circle cx="1374.50" cy="770.50" r="3" fill="none" stroke="#b23ef7" stroke-width="1.2"/><circle cx="1379.50" cy="773.00" r="3" fill="none" stroke="#b23ef7" stroke-width="1.2"/><circle cx="1384.25" cy="763.75" r="3" fill="none" stroke="#b23ef7" stroke-width="1.2"/><circle cx="1388.75" cy="755.75" r="3" fill="none" stroke="#b23ef7" stroke-width="1.2"/><circle cx="1393.75" cy="765.75" r="3" fill="none" stroke="#b23ef7" stroke-width="1.2"/><circle cx="1398.75" cy="770.50" r="3" fill="none" stroke="#b23ef7" stroke-width="1.2"/><circle cx="1436.25" cy="778.75" r="3" fill="none" stroke="#b23ef7" stroke-width="1.2"/><circle cx="1438.05" cy="778.75" r="3" fill="none" stroke="#b23ef7" stroke-width="1.2"/><circle cx="1494.50" cy="796.25" r="3" fill="none" stroke="#b23ef7" stroke-width="1.2"/><circle cx="1496.30" cy="796.25" r="3" fill="none" stroke="#b23ef7" stroke-width="1.2"/><circle cx="1552.50" cy="777.50" r="3" fill="none" stroke="#b23ef7" stroke-width="1.2"/><circle cx="1554.30" cy="777.50" r="3" fill="none" stroke="#b23ef7" stroke-width="1.2"/><circle cx="1611.25" cy="793.00" r="3" fill="none" stroke="#b23ef7" stroke-width="1.2"/><circle cx="1613.05" cy="793.00" r="3" fill="none" stroke="#b23ef7" stroke-width="1.2"/><circle cx="1669.25" cy="750.75" r="3" fill="none" stroke="#b23ef7" stroke-width="1.2"/><circle cx="1671.05" cy="750.75" r="3" fill="none" stroke="#b23ef7" stroke-width="1.2"/><circle cx="1727.50" cy="755.00" r="3" fill="none" stroke="#b23ef7" stroke-width="1.2"/><circle cx="1729.30" cy="755.00" r="3" fill="none" stroke="#b23ef7" stroke-width="1.2"/><circle cx="1785.75" cy="688.00" r="3" fill="none" stroke="#b23ef7" stroke-width="1.2"/><circle cx="1787.55" cy="688.00" r="3" fill="none" stroke="#b23ef7" stroke-width="1.2"/><circle cx="1843.75" cy="755.50" r="3" fill="none" stroke="#b23ef7" stroke-width="1.2"/><circle cx="1845.55" cy="755.50" r="3" fill="none" stroke="#b23ef7" stroke-width="1.2"/><circle cx="1883.75" cy="791.25" r="3" fill="none" stroke="#b23ef7" stroke-width="1.2"/><circle cx="1888.25" cy="788.00" r="3" fill="none" stroke="#b23ef7" stroke-width="1.2"/><circle cx="1893.00" cy="785.00" r="3" fill="none" stroke="#b23ef7" stroke-width="1.2"/><circle cx="1897.50" cy="781.75" r="3" fill="none" stroke="#b23ef7" stroke-width="1.2"/></svg>
<div class="t" style="left:349.95px;top:537.54px;font-size:17.2px;color:#b042f2;-webkit-text-stroke:0.15px currentColor;">1.244 Th/s</div>
<div class="t" style="left:349.95px;top:589.20px;font-size:17.2px;color:#b042f2;-webkit-text-stroke:0.15px currentColor;">1.242 Th/s</div>
<div class="t" style="left:359.52px;top:640.87px;font-size:17.2px;color:#b042f2;-webkit-text-stroke:0.15px currentColor;">1.24 Th/s</div>
<div class="t" style="left:349.95px;top:692.54px;font-size:17.2px;color:#b042f2;-webkit-text-stroke:0.15px currentColor;">1.238 Th/s</div>
<div class="t" style="left:349.95px;top:744.20px;font-size:17.2px;color:#b042f2;-webkit-text-stroke:0.15px currentColor;">1.236 Th/s</div>
<div class="t" style="left:349.95px;top:795.87px;font-size:17.2px;color:#b042f2;-webkit-text-stroke:0.15px currentColor;">1.234 Th/s</div>
<div class="t" style="left:349.95px;top:847.54px;font-size:17.2px;color:#b042f2;-webkit-text-stroke:0.15px currentColor;">1.232 Th/s</div>
<div class="t" style="left:1913.33px;top:537.71px;font-size:17px;color:#b8babd;-webkit-text-stroke:0.15px currentColor;">76 °C</div>
<div class="t" style="left:1913.33px;top:572.15px;font-size:17px;color:#b8babd;-webkit-text-stroke:0.15px currentColor;">74 °C</div>
<div class="t" style="left:1913.33px;top:606.59px;font-size:17px;color:#b8babd;-webkit-text-stroke:0.15px currentColor;">72 °C</div>
<div class="t" style="left:1913.33px;top:641.04px;font-size:17px;color:#b8babd;-webkit-text-stroke:0.15px currentColor;">70 °C</div>
<div class="t" style="left:1913.34px;top:675.48px;font-size:17px;color:#b8babd;-webkit-text-stroke:0.15px currentColor;">68 °C</div>
<div class="t" style="left:1913.34px;top:709.93px;font-size:17px;color:#b8babd;-webkit-text-stroke:0.15px currentColor;">66 °C</div>
<div class="t" style="left:1913.34px;top:744.37px;font-size:17px;color:#b8babd;-webkit-text-stroke:0.15px currentColor;">64 °C</div>
<div class="t" style="left:1913.34px;top:778.82px;font-size:17px;color:#b8babd;-webkit-text-stroke:0.15px currentColor;">62 °C</div>
<div class="t" style="left:1913.34px;top:813.26px;font-size:17px;color:#b8babd;-webkit-text-stroke:0.15px currentColor;">60 °C</div>
<div class="t" style="left:1913.52px;top:847.71px;font-size:17px;color:#b8babd;-webkit-text-stroke:0.15px currentColor;">58 °C</div>
<div class="t" style="left:1751.22px;top:873.11px;font-size:17px;color:#b8babd;-webkit-text-stroke:0.15px currentColor;">9PM</div>
<div class="card" style="left:304px;top:960px;width:553px;height:350px;"></div>
<div class="card" style="left:877px;top:960px;width:553px;height:350px;"></div>
<div class="card" style="left:1450px;top:960px;width:554px;height:350px;"></div>
<div class="t" style="left:536.56px;top:1006.58px;font-size:27.9px;color:#ffffff;transform:scaleX(1.1097);transform-origin:2.29px 0;">Power</div>
<div class="t" style="left:345.01px;top:1060.59px;font-size:18.2px;color:#ffffff;transform:scaleX(1.1448);transform-origin:1.49px 0;">Power</div>
<div class="t" style="left:755.78px;top:1060.39px;font-size:18.2px;color:#ffffff;transform:scaleX(1.0198);transform-origin:0.92px 0;">21.2 W</div>
<div style="position:absolute;left:346px;top:1087px;width:469.0px;height:8.4px;background:#dee2e6;border-radius:4.2px;overflow:hidden;"><div style="position:absolute;left:0;top:0;width:248.0px;height:100%;background:#b340f5;"></div></div>
<div class="t" style="left:344.52px;top:1118.59px;font-size:18.2px;color:#ffffff;transform:scaleX(1.1405);transform-origin:1.68px 0;">Input Voltage</div>
<div class="t" style="left:770.77px;top:1118.39px;font-size:18.2px;color:#ffffff;transform:scaleX(1.0315);transform-origin:0.73px 0;">5.2 V</div>
<div style="position:absolute;left:346px;top:1145px;width:469.0px;height:8.4px;background:#dee2e6;border-radius:4.2px;overflow:hidden;"><div style="position:absolute;left:0;top:0;width:444.0px;height:100%;background:#b340f5;"></div><div style="position:absolute;left:427.0px;top:0;width:4.2px;height:100%;background:#ffffff;"></div></div>
<div class="t" style="left:762.42px;top:1156.82px;font-size:13.2px;color:#ffffff;transform:scaleX(1.0142);transform-origin:0.53px 0;">5 V</div>
<div class="t" style="left:345.86px;top:1176.49px;font-size:18.2px;color:#ffffff;transform:scaleX(1.0671);transform-origin:0.04px 0;">ASIC Frequency</div>
<div class="t" style="left:733.58px;top:1176.49px;font-size:18.2px;color:#ffffff;transform:scaleX(1.1268);transform-origin:0.92px 0;">605 MHz</div>
<div style="position:absolute;left:346px;top:1202.4px;width:469.0px;height:8.4px;background:#dee2e6;border-radius:4.2px;overflow:hidden;"><div style="position:absolute;left:0;top:0;width:355.0px;height:100%;background:#b340f5;"></div></div>
<div class="t" style="left:344.71px;top:1234.19px;font-size:18.2px;color:#ffffff;transform:scaleX(1.0899);transform-origin:1.49px 0;">Measured ASIC Voltage</div>
<div class="t" style="left:767.01px;top:1234.19px;font-size:18.2px;color:#ffffff;transform:scaleX(0.9012);transform-origin:1.39px 0;">1.14 V</div>
<div style="position:absolute;left:346px;top:1260px;width:469.0px;height:8.4px;background:#dee2e6;border-radius:4.2px;overflow:hidden;"><div style="position:absolute;left:0;top:0;width:297.0px;height:100%;background:#b340f5;"></div></div>
<div class="t" style="left:1120.21px;top:1006.38px;font-size:27.9px;color:#ffffff;transform:scaleX(1.1162);transform-origin:2.29px 0;">Heat</div>
<div class="t" style="left:918.71px;top:1060.09px;font-size:18.2px;color:#ffffff;transform:scaleX(1.0721);transform-origin:0.04px 0;">ASIC Temperature</div>
<div class="t" style="left:1321.27px;top:1060.09px;font-size:18.2px;color:#ffffff;transform:scaleX(1.1012);transform-origin:0.73px 0;">58.5 °C</div>
<div style="position:absolute;left:918.5px;top:1087px;width:470.2px;height:8.4px;background:#dee2e6;border-radius:4.2px;overflow:hidden;"><div style="position:absolute;left:0;top:0;width:366.0px;height:100%;background:#b340f5;"></div></div>
<div class="t" style="left:918.67px;top:1118.34px;font-size:18.2px;color:#ffffff;transform:scaleX(1.1051);transform-origin:0.08px 0;">Voltage Regulator Temperature</div>
<div class="t" style="left:1338.58px;top:1118.34px;font-size:18.2px;color:#ffffff;transform:scaleX(1.0883);transform-origin:0.92px 0;">64 °C</div>
<div style="position:absolute;left:918.5px;top:1145px;width:470.2px;height:8.4px;background:#dee2e6;border-radius:4.2px;overflow:hidden;"><div style="position:absolute;left:0;top:0;width:250.2px;height:100%;background:#b340f5;"></div></div>
<div class="t" style="left:1701.11px;top:1006.38px;font-size:27.9px;color:#ffffff;transform:scaleX(1.0460);transform-origin:2.29px 0;">Fan</div>
<div class="t" style="left:1491.01px;top:1060.09px;font-size:18.2px;color:#ffffff;transform:scaleX(1.0651);transform-origin:1.49px 0;">Fan Speed</div>
<div class="t" style="left:1896.08px;top:1060.09px;font-size:18.2px;color:#ffffff;transform:scaleX(1.1512);transform-origin:0.42px 0;">40.0 %</div>
<div style="position:absolute;left:1492px;top:1087px;width:469.2px;height:8.4px;background:#dee2e6;border-radius:4.2px;overflow:hidden;"><div style="position:absolute;left:0;top:0;width:187.5px;height:100%;background:#b340f5;"></div></div>
<div class="t" style="left:1491.01px;top:1118.34px;font-size:18.2px;color:#ffffff;transform:scaleX(1.0423);transform-origin:1.49px 0;">Fan RPM</div>
<div class="t" style="left:1868.06px;top:1118.34px;font-size:18.2px;color:#ffffff;transform:scaleX(1.0948);transform-origin:0.69px 0;">3254 RPM</div>
<div style="position:absolute;left:1492px;top:1145px;width:469.2px;height:8.4px;background:#dee2e6;border-radius:4.2px;overflow:hidden;"><div style="position:absolute;left:0;top:0;width:217.5px;height:100%;background:#b340f5;"></div></div>
<div class="card" style="left:304px;top:1331px;width:553px;height:264px;"></div>
<div class="card" style="left:877px;top:1331px;width:553px;height:264px;"></div>
<div class="card" style="left:1450px;top:1331px;width:554px;height:264px;"></div>
<div class="t" style="left:344.70px;top:1375.08px;font-size:30.5px;color:#ffffff;">Pool</div>
<div style="position:absolute;left:684.4px;top:1372.4px;width:130.6px;height:39.2px;border:1px solid #464e59;border-radius:3px;background:#0b1219;"></div>
<div class="t" style="left:699.30px;top:1383.41px;font-size:18.3px;color:#ffffff;transform:scaleX(1.0700);transform-origin:1.50px 0;">Primary</div>
<svg style="position:absolute;left:777px;top:1383.3px" width="25.1" height="17.6" viewBox="777 1383.3 25.1 17.6"><path d="M781.8,1388.1 L789.55,1396.1000000000001 L797.3000000000001,1388.1" fill="none" stroke="#a9adb3" stroke-width="2.1" stroke-linecap="round" stroke-linejoin="round"/></svg>
<div class="t" style="left:345.13px;top:1432.61px;font-size:19px;color:#a3a7ae;transform:scaleX(0.9551);transform-origin:1.47px 0;">URL</div>
<svg style="position:absolute;left:383.7px;top:1432.3px" width="20" height="20" viewBox="383.7 1432.3 20 20"><circle cx="393.7" cy="1442.3" r="6.80" fill="none" stroke="#a3a7ae" stroke-width="1.4"/><path d="M391.40,1440.40 C391.40,1437.70 396.30,1437.70 396.10,1440.70 C396.00,1442.50 393.70,1442.70 393.70,1444.30" fill="none" stroke="#a3a7ae" stroke-width="1.33" stroke-linecap="round"/><circle cx="393.7" cy="1446.60" r="0.85" fill="#a3a7ae"/></svg>
<div class="t" style="left:460.67px;top:1432.61px;font-size:19px;color:#ffffff;transform:scaleX(1.1182);transform-origin:0.53px 0;">stratum.braiins.com:3333</div>
<div class="t" style="left:345.13px;top:1460.21px;font-size:19px;color:#a3a7ae;transform:scaleX(1.0774);transform-origin:1.47px 0;">User</div>
<svg style="position:absolute;left:390.8px;top:1459.8px" width="20" height="20" viewBox="390.8 1459.8 20 20"><circle cx="400.8" cy="1469.8" r="6.80" fill="none" stroke="#a3a7ae" stroke-width="1.4"/><path d="M398.50,1467.90 C398.50,1465.20 403.40,1465.20 403.20,1468.20 C403.10,1470.00 400.80,1470.20 400.80,1471.80" fill="none" stroke="#a3a7ae" stroke-width="1.33" stroke-linecap="round"/><circle cx="400.8" cy="1474.10" r="0.85" fill="#a3a7ae"/></svg>
<div style="position:absolute;left:461.60px;top:1468.4px;width:3.3px;height:3.3px;background:#ffffff;"></div><div style="position:absolute;left:470.05px;top:1468.4px;width:3.3px;height:3.3px;background:#ffffff;"></div><div style="position:absolute;left:478.50px;top:1468.4px;width:3.3px;height:3.3px;background:#ffffff;"></div><div style="position:absolute;left:486.95px;top:1468.4px;width:3.3px;height:3.3px;background:#ffffff;"></div><div style="position:absolute;left:495.40px;top:1468.4px;width:3.3px;height:3.3px;background:#ffffff;"></div><div style="position:absolute;left:503.85px;top:1468.4px;width:3.3px;height:3.3px;background:#ffffff;"></div><div style="position:absolute;left:512.30px;top:1468.4px;width:3.3px;height:3.3px;background:#ffffff;"></div><div style="position:absolute;left:520.75px;top:1468.4px;width:3.3px;height:3.3px;background:#ffffff;"></div><div style="position:absolute;left:529.20px;top:1468.4px;width:3.3px;height:3.3px;background:#ffffff;"></div><div style="position:absolute;left:537.65px;top:1468.4px;width:3.3px;height:3.3px;background:#ffffff;"></div><div style="position:absolute;left:546.10px;top:1468.4px;width:3.3px;height:3.3px;background:#ffffff;"></div><div style="position:absolute;left:554.55px;top:1468.4px;width:3.3px;height:3.3px;background:#ffffff;"></div>
<div class="t" style="left:346.17px;top:1488.71px;font-size:19px;color:#a3a7ae;transform:scaleX(1.0354);transform-origin:0.43px 0;">Time</div>
<svg style="position:absolute;left:392.5px;top:1487.5px" width="20" height="20" viewBox="392.5 1487.5 20 20"><circle cx="402.5" cy="1497.5" r="6.80" fill="none" stroke="#a3a7ae" stroke-width="1.4"/><path d="M400.20,1495.60 C400.20,1492.90 405.10,1492.90 404.90,1495.90 C404.80,1497.70 402.50,1497.90 402.50,1499.50" fill="none" stroke="#a3a7ae" stroke-width="1.33" stroke-linecap="round"/><circle cx="402.5" cy="1501.80" r="0.85" fill="#a3a7ae"/></svg>
<div class="t" style="left:460.24px;top:1488.71px;font-size:19px;color:#ffffff;transform:scaleX(0.9965);transform-origin:0.96px 0;">231.154 ms</div>
<div class="t" style="left:345.04px;top:1516.41px;font-size:19px;color:#a3a7ae;transform:scaleX(1.1511);transform-origin:1.56px 0;">Difficulty</div>
<div class="t" style="left:460.24px;top:1516.41px;font-size:19px;color:#ffffff;transform:scaleX(1.1263);transform-origin:0.96px 0;">2048</div>
<div class="t" style="left:917.30px;top:1375.48px;font-size:30.5px;color:#ffffff;transform:scaleX(0.9957);transform-origin:2.50px 0;">Block Header</div>
<div class="t" style="left:917.94px;top:1432.71px;font-size:19px;color:#a3a7ae;transform:scaleX(1.1104);transform-origin:1.56px 0;">Height</div>
<div class="t" style="left:1033.31px;top:1432.71px;font-size:19px;color:#ffffff;transform:scaleX(1.1229);transform-origin:0.89px 0;">930565</div>
<div class="t" style="left:917.94px;top:1460.91px;font-size:19px;color:#a3a7ae;transform:scaleX(1.1540);transform-origin:1.56px 0;">Difficulty</div>
<div class="t" style="left:1032.55px;top:1460.91px;font-size:19px;color:#ffffff;">148.26 T</div>
<div class="t" style="left:918.64px;top:1489.01px;font-size:19px;color:#a3a7ae;transform:scaleX(1.1290);transform-origin:0.86px 0;">Scriptsig</div>
<div class="t" style="left:1034.4px;top:1492.48px;font-size:17px;letter-spacing:1.830px;font-family:'Liberation Mono',monospace;color:#d0d0d0;white-space:pre;-webkit-text-stroke:0;">./slush/].y.].E...mm..&amp;.....B</div>
<div class="t" style="left:1034.4px;top:1514.58px;font-size:17px;letter-spacing:1.830px;font-family:'Liberation Mono',monospace;color:#d0d0d0;white-space:pre;-webkit-text-stroke:0;">.X....R..u3.q\8.. .l.........</div>
<div class="t" style="left:1034.4px;top:1536.68px;font-size:17px;letter-spacing:1.830px;font-family:'Liberation Mono',monospace;color:#d0d0d0;white-space:pre;-webkit-text-stroke:0;">........</div>
<div class="t" style="left:1490.50px;top:1375.43px;font-size:30.5px;color:#ffffff;transform:scaleX(1.0196);transform-origin:2.50px 0;">Hashrate Registers</div>
<div class="t" style="left:1690.82px;top:1432.85px;font-size:17.3px;color:#e2e2e2;font-weight:700;transform:scaleX(0.9727);transform-origin:1.16px 0;">Domains</div>
<div style="position:absolute;left:1493px;top:1454.5px;width:117.00px;height:40px;background:#c169f6;"></div>
<div class="t" style="left:1520.94px;top:1468.76px;font-size:14.75px;color:#f3e6fd;transform:scaleX(1.0211);transform-origin:0.56px 0;-webkit-text-stroke:0.2px currentColor;">329 Gh/s</div>
<div style="position:absolute;left:1611.75px;top:1454.5px;width:116.25px;height:40px;background:#a93ce7;"></div>
<div class="t" style="left:1639.31px;top:1468.76px;font-size:14.75px;color:#f3e6fd;transform:scaleX(1.0211);transform-origin:0.56px 0;-webkit-text-stroke:0.2px currentColor;">302 Gh/s</div>
<div style="position:absolute;left:1730px;top:1454.5px;width:118.00px;height:40px;background:#9d35d9;"></div>
<div class="t" style="left:1758.26px;top:1468.76px;font-size:14.75px;color:#f3e6fd;transform:scaleX(1.0242);transform-origin:0.74px 0;-webkit-text-stroke:0.2px currentColor;">298 Gh/s</div>
<div style="position:absolute;left:1849.5px;top:1454.5px;width:110.50px;height:40px;background:#b546f7;"></div>
<div class="t" style="left:1874.19px;top:1468.76px;font-size:14.75px;color:#f3e6fd;transform:scaleX(1.0211);transform-origin:0.56px 0;-webkit-text-stroke:0.2px currentColor;">312 Gh/s</div>
</div></body></html>
